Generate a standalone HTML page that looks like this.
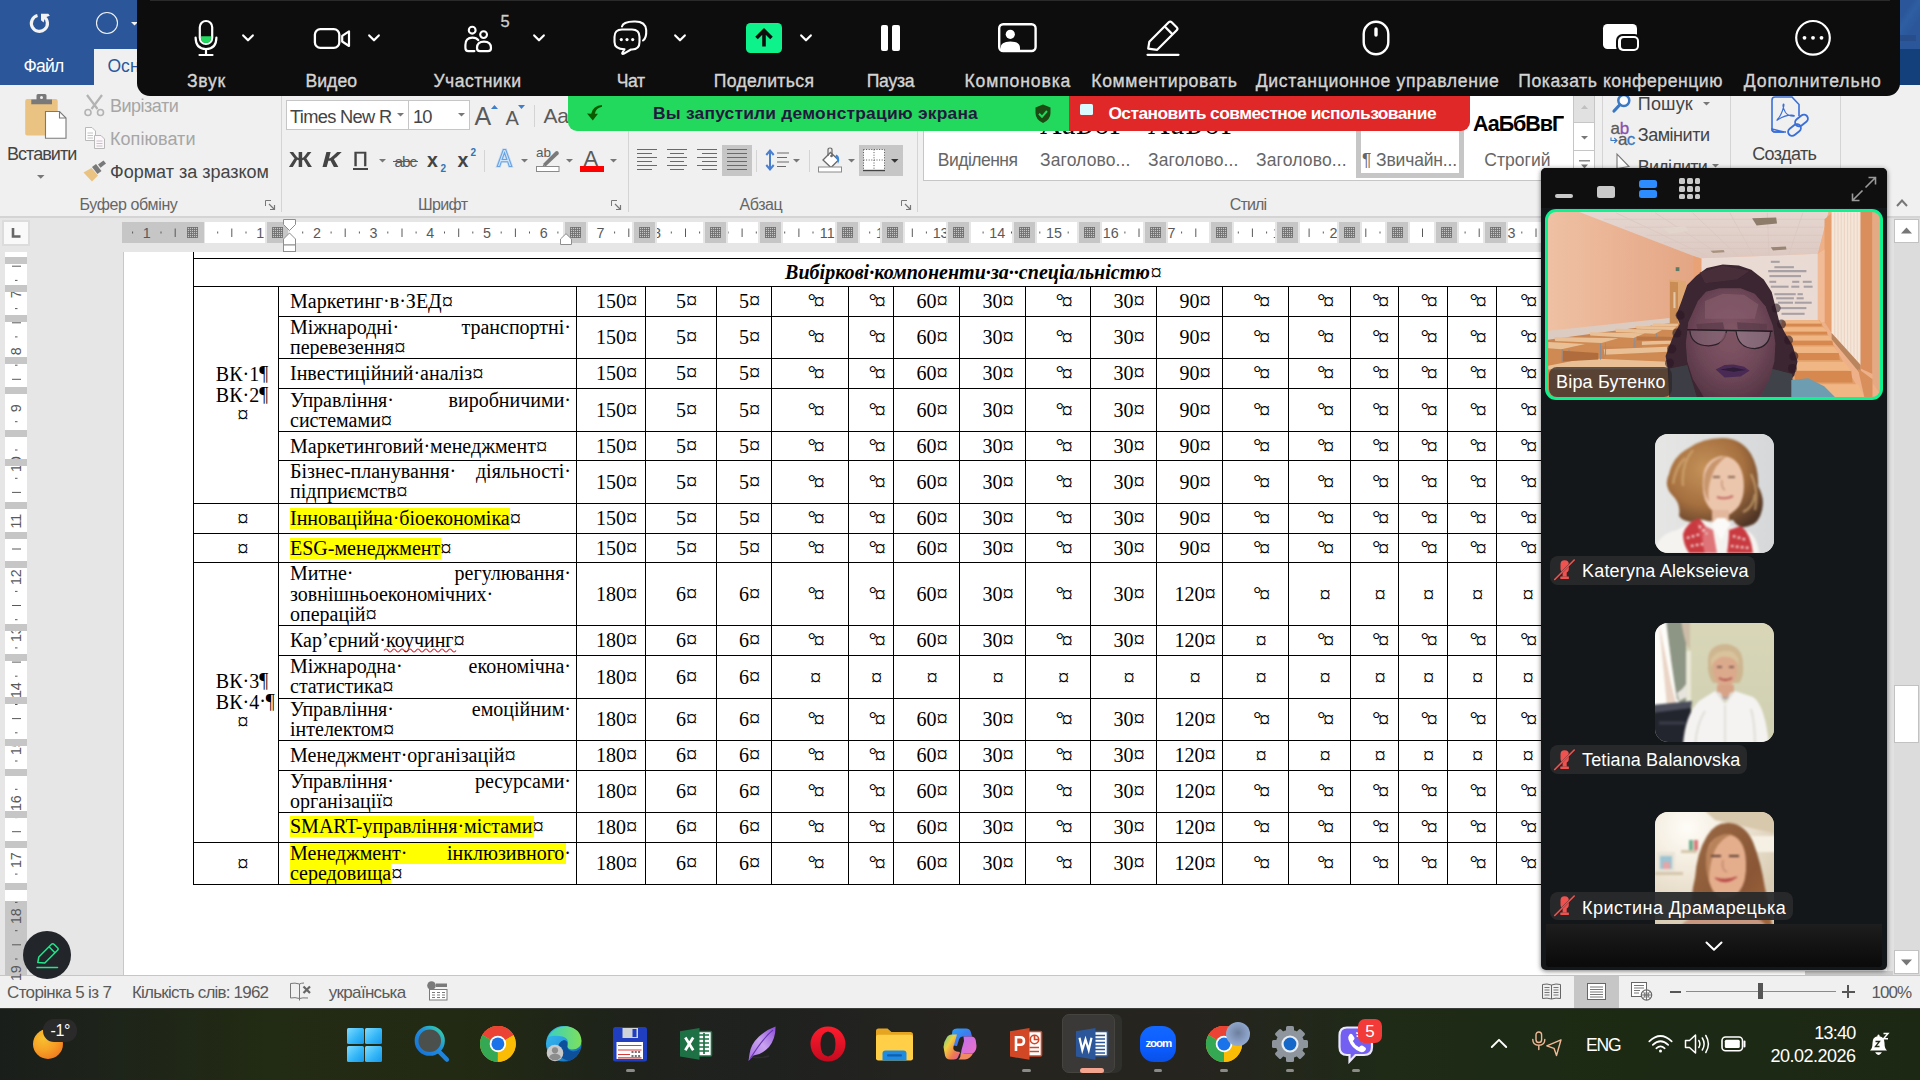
<!DOCTYPE html>
<html><head><meta charset="utf-8"><title>Word</title>
<style>
html,body{margin:0;padding:0;}
body{width:1920px;height:1080px;overflow:hidden;position:relative;background:#e6e6e6;font-family:"Liberation Sans",sans-serif;}
.t{position:absolute;white-space:pre;color:#000;}
.s{font-family:"Liberation Serif",serif;font-size:20px;line-height:20px;}
.m{font-family:"Liberation Mono",monospace;}
.c{width:200px;text-align:center;}
.r{width:300px;text-align:right;}
.c b{position:relative;font-weight:400;}
.c i{position:absolute;left:100%;top:0;font-style:normal;}
.k{font-size:22.5px;line-height:0;font-style:normal;text-decoration:none;position:relative;top:1px;}
div{position:absolute;}
svg{overflow:visible;}
</style></head><body>
<div style="left:0px;top:0px;width:1920px;height:85px;background:#2b579a;"></div>
<div style="left:94px;top:49px;width:120px;height:37px;background:#f0f0f0;"></div>
<div style="left:0px;top:85px;width:1920px;height:131px;background:#f0f0f0;"></div>
<div style="left:0px;top:216px;width:1920px;height:2px;background:#d4d4d4;"></div>
<div style="left:0px;top:218px;width:1920px;height:757px;background:#e6e6e6;"></div>
<div style="left:123px;top:252px;width:1764px;height:723px;background:#c8c8c8;"></div>
<div style="left:124px;top:252px;width:1763px;height:723px;background:#ffffff;"></div>
<div style="left:1887px;top:218px;width:7px;height:757px;background:#e2e2e2;"></div>
<div style="left:1894px;top:218px;width:26px;height:757px;background:#dcdcdc;"></div>
<div style="left:0px;top:975px;width:1920px;height:33px;background:#f0f0f0;"></div>
<div style="left:0px;top:975px;width:1920px;height:1px;background:#c6c6c6;"></div>
<div style="left:0px;top:1008px;width:1920px;height:72px;background:linear-gradient(90deg,#1a1e1a 0%,#1d231a 5%,#222b13 14%,#222a13 24%,#1e221b 33%,#1f211f 40%,#25241f 50%,#26241f 62%,#1f2a17 72%,#1c2a14 85%,#1c2814 100%);"></div>
<div style="left:0px;top:1008px;width:1920px;height:1px;background:#3b3d38;"></div>
<svg style="position:absolute;left:0px;top:0px;" width="1" height="1" viewBox="0 0 1 1"><path d="M43.6 16.500A8 8 0 1 1 37.500 15.550" fill="none" stroke="#f3f3f3" stroke-width="3.200"/><path d="M41 13.800H48.300L49.800 15.800L45 17.600L43.600 22.500L41 20.300Z" fill="#f3f3f3"/></svg>
<svg style="position:absolute;left:95px;top:11px;" width="24" height="24" viewBox="0 0 24 24"><circle cx="12" cy="12" r="10.5" fill="none" stroke="#f3f3f3" stroke-width="1.1"/></svg>
<svg style="position:absolute;left:130.5px;top:21.75px;" width="7" height="3.5" viewBox="0 0 7 3.5"><path d="M0 0H7L3.5 3.5Z" fill="#f3f3f3"/></svg>
<span class="t" style="left:23.5px;top:58px;font-size:17.5px;line-height:17.5px;color:#ffffff;letter-spacing:-0.758px;">Файл</span>
<span class="t" style="left:107.5px;top:58px;font-size:17.5px;line-height:17.5px;color:#2b579a;letter-spacing:0.007px;">Основне</span>
<div style="left:1896px;top:0px;width:24px;height:49px;background:linear-gradient(125deg,#2b579a 0%,#2b579a 30%,#2f5ea3 42%,#2b579a 62%,#2b579a 100%);"></div>
<div style="left:1896px;top:35px;width:20px;height:6px;background:#274e8b;"></div>
<div style="left:1896px;top:49px;width:24px;height:36px;background:#13407a;"></div>
<svg style="position:absolute;left:25px;top:94px;" width="42" height="45" viewBox="0 0 42 45"><rect x="0.2" y="5" width="32.5" height="36.4" rx="2" fill="#eac282"/><path d="M6.3 5.5H11.5V1.5Q11.5 0 13 0H20Q21.5 0 21.5 1.5V5.5H27V10.3H6.3Z" fill="#797979"/><circle cx="16.5" cy="3.4" r="1.5" fill="#f0f0f0"/><path d="M20.5 17.5H34.5L41 24V44.3H20.5Z" fill="#fff" stroke="#797979" stroke-width="1.1"/><path d="M34.5 17.5V24H41" fill="none" stroke="#797979" stroke-width="1.1"/></svg>
<span class="t" style="left:7px;top:145px;font-size:18px;line-height:18px;color:#444444;letter-spacing:-0.961px;">Вставити</span>
<svg style="position:absolute;left:37.25px;top:175.1px;" width="7.5" height="3.8" viewBox="0 0 7.5 3.8"><path d="M0 0H7.5L3.75 3.8Z" fill="#777777"/></svg>
<svg style="position:absolute;left:84px;top:94px;" width="21" height="23" viewBox="0 0 21 23"><path d="M3 1L13.5 15M18 1L7.5 15" stroke="#b3b3b3" stroke-width="2.2" fill="none"/><circle cx="4" cy="18.5" r="3" fill="none" stroke="#b3b3b3" stroke-width="1.6"/><circle cx="16.5" cy="18.5" r="3" fill="none" stroke="#b3b3b3" stroke-width="1.6"/></svg>
<span class="t" style="left:110px;top:97px;font-size:18px;line-height:18px;color:#a6a6a6;letter-spacing:-0.494px;">Вирізати</span>
<svg style="position:absolute;left:85px;top:127px;" width="21" height="23" viewBox="0 0 21 23"><path d="M0.5 0.5H7L10.5 4V13.5H0.5Z" fill="#fdfdfd" stroke="#b9b9b9" stroke-width="1"/><path d="M9.5 8.5H16L19.5 12V21.5H9.5Z" fill="#fdf6fb" stroke="#b9b9b9" stroke-width="1"/><path d="M2.5 6H8M2.5 8.5H8M2.5 11H8M11.5 14H17.5M11.5 16.5H17.5M11.5 19H17.5" stroke="#c4c4c4" stroke-width="1"/></svg>
<span class="t" style="left:110px;top:130px;font-size:18px;line-height:18px;color:#a6a6a6;letter-spacing:0.052px;">Копіювати</span>
<svg style="position:absolute;left:83px;top:160px;" width="24" height="22" viewBox="0 0 24 22"><path d="M0.5 12.5L8.5 8L15 15.5L9 21.5Z" fill="#eac282"/><path d="M9 7L13 4L18.5 11L14.5 14Z" fill="#797979"/><path d="M15 4.5L20.5 0.5L23 3.5L17.5 7.8Z" fill="#797979"/></svg>
<span class="t" style="left:110px;top:163px;font-size:18px;line-height:18px;color:#444444;">Формат за зразком</span>
<span class="t" style="left:79.4px;top:197px;font-size:16px;line-height:16px;color:#666666;letter-spacing:-0.365px;">Буфер обміну</span>
<svg style="position:absolute;left:264.5px;top:199.5px;" width="11" height="11" viewBox="0 0 11 11"><path d="M0.5 6V0.5H6" fill="none" stroke="#777" stroke-width="1"/><path d="M4 4L9 9M9.5 5V9.5H5" fill="none" stroke="#777" stroke-width="1.2"/></svg>
<div style="left:281px;top:90px;width:1px;height:122px;background:#d4d4d4;"></div>
<div style="left:286px;top:100px;width:184px;height:30px;background:#c6c6c6;"></div>
<div style="left:287px;top:101px;width:121px;height:28px;background:#fff;"></div>
<div style="left:409px;top:101px;width:60px;height:28px;background:#fff;"></div>
<span class="t" style="left:290px;top:108px;font-size:18.3px;line-height:18.3px;color:#444444;letter-spacing:-0.685px;">Times New R</span>
<svg style="position:absolute;left:396.5px;top:112.75px;" width="7" height="3.5" viewBox="0 0 7 3.5"><path d="M0 0H7L3.5 3.5Z" fill="#777777"/></svg>
<span class="t" style="left:413px;top:108px;font-size:18.3px;line-height:18.3px;color:#444444;letter-spacing:-0.922px;">10</span>
<svg style="position:absolute;left:457.5px;top:112.75px;" width="7" height="3.5" viewBox="0 0 7 3.5"><path d="M0 0H7L3.5 3.5Z" fill="#777777"/></svg>
<span class="t" style="left:474.5px;top:104px;font-size:25px;line-height:25px;color:#5a5a5a;letter-spacing:0.812px;">A</span>
<svg style="position:absolute;left:491px;top:105px;" width="7" height="4" viewBox="0 0 7 4"><path d="M0 4L3.5 0L7 4Z" fill="#3e7fc9"/></svg>
<span class="t" style="left:505.5px;top:108px;font-size:20px;line-height:20px;color:#5a5a5a;letter-spacing:0.656px;">A</span>
<svg style="position:absolute;left:518px;top:105px;" width="7" height="4" viewBox="0 0 7 4"><path d="M0 0H7L3.5 4Z" fill="#3e7fc9"/></svg>
<div style="left:534px;top:105px;width:1px;height:22px;background:#d4d4d4;"></div>
<span class="t" style="left:543.4px;top:105px;font-size:21px;line-height:21px;color:#5a5a5a;letter-spacing:-0.044px;">Aa</span>
<span class="t" style="left:289.4px;top:150px;font-size:21.5px;line-height:21.5px;color:#444444;font-weight:700;transform:scaleX(1.173);transform-origin:0 0;">Ж</span>
<span class="t" style="left:321.5px;top:150px;font-size:21.5px;line-height:21.5px;color:#444444;font-weight:700;font-style:italic;transform:scaleX(1.362);transform-origin:0 0;">К</span>
<span class="t" style="left:353.3px;top:149px;font-size:20px;line-height:20px;color:#444444;transform:scaleX(1.023);transform-origin:0 0;-webkit-text-stroke:0.4px #444;">П</span>
<div style="left:353.3px;top:168.3px;width:14.7px;height:1.5px;background:#444444;"></div>
<svg style="position:absolute;left:379.0px;top:159.05px;" width="7" height="3.5" viewBox="0 0 7 3.5"><path d="M0 0H7L3.5 3.5Z" fill="#777777"/></svg>
<span class="t" style="left:394.5px;top:154px;font-size:15.5px;line-height:15.5px;color:#5a5a5a;letter-spacing:-1.167px;">abc</span>
<div style="left:393px;top:161px;width:24.5px;height:1px;background:#5a5a5a;"></div>
<span class="t" style="left:427px;top:151px;font-size:19.5px;line-height:19.5px;color:#444444;font-weight:700;letter-spacing:0.641px;">x</span>
<span class="t" style="left:440.5px;top:164px;font-size:10px;line-height:10px;color:#2e75b6;font-weight:700;letter-spacing:-0.062px;">2</span>
<span class="t" style="left:457.5px;top:151px;font-size:19.5px;line-height:19.5px;color:#444444;font-weight:700;letter-spacing:0.641px;">x</span>
<span class="t" style="left:470.5px;top:148px;font-size:10px;line-height:10px;color:#2e75b6;font-weight:700;letter-spacing:-0.062px;">2</span>
<div style="left:484px;top:150px;width:1px;height:22px;background:#d4d4d4;"></div>
<svg style="position:absolute;left:495px;top:148px;" width="20" height="20" viewBox="0 0 20 20"><path d="M2.2 18.5L8.3 1.5H10.7L16.8 18.5H14.3L12.7 13.7H6.3L4.7 18.5Z M7.1 11.5H11.9L9.5 4.6Z" fill="#ffffff" stroke="#3e86d6" stroke-width="1.1" fill-rule="evenodd"/><path d="M2.2 18.5L8.3 1.5H10.7L16.8 18.5H14.3L12.7 13.7H6.3L4.7 18.5Z M7.1 11.5H11.9L9.5 4.6Z" fill="none" stroke="#9cc6f2" stroke-width="2.6" opacity=".45" fill-rule="evenodd"/></svg>
<svg style="position:absolute;left:520.5px;top:159.05px;" width="7" height="3.5" viewBox="0 0 7 3.5"><path d="M0 0H7L3.5 3.5Z" fill="#777777"/></svg>
<span class="t" style="left:536px;top:146px;font-size:13.5px;line-height:13.5px;color:#5a5a5a;letter-spacing:-0.016px;">ab</span>
<svg style="position:absolute;left:536px;top:149px;" width="25" height="24" viewBox="0 0 25 24"><path d="M9.5 17.5L7 15L19.5 2.5Q21 1.5 22.3 2.8Q23.5 4.3 22.3 5.6Z" fill="#7a7a7a"/><path d="M5 20L7.5 15.5L9.5 17.5Z" fill="#7a7a7a"/><rect x="0.5" y="17.5" width="22.5" height="5" fill="#fff" stroke="#8a8a8a" stroke-width="1"/></svg>
<svg style="position:absolute;left:565.5px;top:159.05px;" width="7" height="3.5" viewBox="0 0 7 3.5"><path d="M0 0H7L3.5 3.5Z" fill="#777777"/></svg>
<span class="t" style="left:583.5px;top:148px;font-size:22px;line-height:22px;color:#5a5a5a;letter-spacing:2.312px;">A</span>
<div style="left:580px;top:166px;width:24px;height:6px;background:#ff0000;"></div>
<svg style="position:absolute;left:610.0px;top:159.05px;" width="7" height="3.5" viewBox="0 0 7 3.5"><path d="M0 0H7L3.5 3.5Z" fill="#777777"/></svg>
<span class="t" style="left:418px;top:197px;font-size:16px;line-height:16px;color:#666666;letter-spacing:-0.628px;">Шрифт</span>
<svg style="position:absolute;left:610.5px;top:199.5px;" width="11" height="11" viewBox="0 0 11 11"><path d="M0.5 6V0.5H6" fill="none" stroke="#777" stroke-width="1"/><path d="M4 4L9 9M9.5 5V9.5H5" fill="none" stroke="#777" stroke-width="1.2"/></svg>
<div style="left:628px;top:90px;width:1px;height:122px;background:#d4d4d4;"></div>
<svg style="position:absolute;left:0px;top:0px;" width="1" height="1" viewBox="0 0 1 1"><path d="M637 149.5H657M637 153.5H652M637 157.5H657M637 161.5H652M637 165.5H657M637 169.5H652" stroke="#6a6a6a" stroke-width="1.2" fill="none"/></svg>
<svg style="position:absolute;left:0px;top:0px;" width="1" height="1" viewBox="0 0 1 1"><path d="M667 149.5H687M670 153.5H684M667 157.5H687M670 161.5H684M667 165.5H687M670 169.5H684" stroke="#6a6a6a" stroke-width="1.2" fill="none"/></svg>
<svg style="position:absolute;left:0px;top:0px;" width="1" height="1" viewBox="0 0 1 1"><path d="M697 149.5H717M702 153.5H717M697 157.5H717M702 161.5H717M697 165.5H717M702 169.5H717" stroke="#6a6a6a" stroke-width="1.2" fill="none"/></svg>
<div style="left:722px;top:145px;width:30px;height:31px;background:#c6c6c6;"></div>
<svg style="position:absolute;left:0px;top:0px;" width="1" height="1" viewBox="0 0 1 1"><path d="M727 149.5H747M727 153.5H747M727 157.5H747M727 161.5H747M727 165.5H747M727 169.5H747" stroke="#6a6a6a" stroke-width="1.2" fill="none"/></svg>
<div style="left:756px;top:150px;width:1px;height:22px;background:#d4d4d4;"></div>
<svg style="position:absolute;left:765px;top:148px;" width="24" height="24" viewBox="0 0 24 24"><path d="M5 3V21M1.3 7L5 2.5L8.7 7M1.3 17L5 21.5L8.7 17" fill="none" stroke="#4a7fcf" stroke-width="2"/><path d="M12 5H24M12 9.5H22M12 14H24M12 18.5H21" stroke="#6a6a6a" stroke-width="1.2"/></svg>
<svg style="position:absolute;left:793.0px;top:159.05px;" width="7" height="3.5" viewBox="0 0 7 3.5"><path d="M0 0H7L3.5 3.5Z" fill="#777777"/></svg>
<div style="left:809px;top:150px;width:1px;height:22px;background:#d4d4d4;"></div>
<svg style="position:absolute;left:818px;top:147px;" width="25" height="26" viewBox="0 0 25 26"><path d="M5 13L12.5 5.5L20.5 13L13 20.5Z" fill="#fff" stroke="#6a6a6a" stroke-width="1.3"/><path d="M10 9V2.8Q10 1 12 1Q14 1 14 2.8V9" fill="none" stroke="#6a6a6a" stroke-width="1.2"/><circle cx="13.5" cy="9" r="1.3" fill="#6a6a6a"/><path d="M18.5 7.5Q23 10 20 17Q19.5 12 17 9.5Z" fill="#3e86d6"/><rect x="0.5" y="20" width="23" height="5" fill="#fff" stroke="#8a8a8a" stroke-width="1"/></svg>
<svg style="position:absolute;left:848.0px;top:159.05px;" width="7" height="3.5" viewBox="0 0 7 3.5"><path d="M0 0H7L3.5 3.5Z" fill="#777777"/></svg>
<div style="left:859px;top:145px;width:44px;height:31px;background:#c6c6c6;"></div>
<svg style="position:absolute;left:863px;top:149px;" width="22" height="22" viewBox="0 0 22 22"><rect x="0.5" y="0.5" width="21" height="21" fill="#fff" stroke="none"/><path d="M0.5 0.5H21.5M0.5 0.5V21.5M21.5 0.5V21.5M11 0.5V21.5M0.5 11H21.5" stroke="#555" stroke-width="1" stroke-dasharray="1 1.6" fill="none"/><path d="M0 21.5H22" stroke="#444" stroke-width="1.4"/></svg>
<svg style="position:absolute;left:891.25px;top:158.9px;" width="7.5" height="3.8" viewBox="0 0 7.5 3.8"><path d="M0 0H7.5L3.75 3.8Z" fill="#333"/></svg>
<span class="t" style="left:739.6px;top:197px;font-size:16px;line-height:16px;color:#666666;letter-spacing:-0.458px;">Абзац</span>
<svg style="position:absolute;left:900.5px;top:199.5px;" width="11" height="11" viewBox="0 0 11 11"><path d="M0.5 6V0.5H6" fill="none" stroke="#777" stroke-width="1"/><path d="M4 4L9 9M9.5 5V9.5H5" fill="none" stroke="#777" stroke-width="1.2"/></svg>
<div style="left:917px;top:90px;width:1px;height:122px;background:#d4d4d4;"></div>
<div style="left:923px;top:90px;width:672px;height:91px;background:#c6c6c6;"></div>
<div style="left:924px;top:90px;width:670px;height:90px;background:#ffffff;"></div>
<div style="left:1356px;top:96px;width:108px;height:82px;background:#c6c6c6;"></div>
<div style="left:1361px;top:96px;width:98px;height:77px;background:#ffffff;"></div>
<span class="t s" style="left:1040px;top:109px;font-size:30px;line-height:30px;letter-spacing:0.716px;">АаБбГ</span>
<span class="t s" style="left:1148px;top:109px;font-size:30px;line-height:30px;letter-spacing:1.516px;">АаБбГ</span>
<div style="left:924px;top:136px;width:420px;height:12px;background:#fff;"></div>
<span class="t" style="left:937.8px;top:152px;font-size:17.5px;line-height:17.5px;color:#666666;letter-spacing:-0.522px;">Виділення</span>
<span class="t" style="left:1040px;top:152px;font-size:17.5px;line-height:17.5px;color:#666666;letter-spacing:0.116px;">Заголово...</span>
<span class="t" style="left:1148px;top:152px;font-size:17.5px;line-height:17.5px;color:#666666;letter-spacing:0.116px;">Заголово...</span>
<span class="t" style="left:1256px;top:152px;font-size:17.5px;line-height:17.5px;color:#666666;letter-spacing:0.144px;">Заголово...</span>
<span class="t" style="left:1362px;top:152px;font-size:17.5px;line-height:17.5px;color:#666666;letter-spacing:-0.148px;">¶ Звичайн...</span>
<span class="t" style="left:1473px;top:114px;font-size:21.5px;line-height:21.5px;font-weight:700;letter-spacing:-1.047px;">АаБбВвГг</span>
<div style="left:1564px;top:110px;width:9px;height:24px;background:#fff;"></div>
<span class="t" style="left:1484.3px;top:152px;font-size:17.5px;line-height:17.5px;color:#666666;letter-spacing:0.048px;">Строгий</span>
<div style="left:1573px;top:90px;width:22px;height:91px;background:#c6c6c6;"></div>
<div style="left:1574px;top:90px;width:20px;height:32px;background:#e1e1e1;"></div>
<div style="left:1574px;top:123px;width:20px;height:27px;background:#fff;"></div>
<div style="left:1574px;top:151px;width:20px;height:29px;background:#fff;"></div>
<svg style="position:absolute;left:1580.5px;top:105px;" width="7" height="4" viewBox="0 0 7 4"><path d="M0 4L3.5 0L7 4Z" fill="#c0c0c0"/></svg>
<svg style="position:absolute;left:1580.5px;top:135.75px;" width="7" height="3.5" viewBox="0 0 7 3.5"><path d="M0 0H7L3.5 3.5Z" fill="#777777"/></svg>
<svg style="position:absolute;left:1578.5px;top:160px;" width="11" height="9" viewBox="0 0 11 9"><path d="M0 0.8H11" stroke="#777" stroke-width="1.3"/><path d="M2 4.5H9L5.5 8.5Z" fill="#777"/></svg>
<span class="t" style="left:1229.7px;top:197px;font-size:16px;line-height:16px;color:#666666;letter-spacing:-0.824px;">Стилі</span>
<div style="left:1602px;top:90px;width:1px;height:122px;background:#d4d4d4;"></div>
<svg style="position:absolute;left:1612px;top:93px;" width="20" height="20" viewBox="0 0 20 20"><circle cx="11.800" cy="7.600" r="5.500" fill="#fdfdfd" stroke="#3b78c3" stroke-width="2.500"/><path d="M7.600 12L2 18" stroke="#3b78c3" stroke-width="3.200" stroke-linecap="round"/></svg>
<span class="t" style="left:1637.8px;top:95px;font-size:18px;line-height:18px;color:#444444;letter-spacing:0.147px;">Пошук</span>
<svg style="position:absolute;left:1702.5px;top:102.25px;" width="7" height="3.5" viewBox="0 0 7 3.5"><path d="M0 0H7L3.5 3.5Z" fill="#777777"/></svg>
<span class="t" style="left:1610.5px;top:120px;font-size:17px;line-height:17px;color:#5a5a5a;letter-spacing:-0.469px;-webkit-text-stroke:.3px #5a5a5a;">a</span>
<span class="t" style="left:1619.8px;top:120px;font-size:17px;line-height:17px;color:#8a4fb0;letter-spacing:-0.769px;-webkit-text-stroke:.3px #8a4fb0;">b</span>
<span class="t" style="left:1618px;top:131px;font-size:17px;line-height:17px;color:#5a5a5a;letter-spacing:-0.469px;-webkit-text-stroke:.3px #5a5a5a;">a</span>
<span class="t" style="left:1626.8px;top:131px;font-size:17px;line-height:17px;color:#3b78c3;letter-spacing:-1.300px;-webkit-text-stroke:.3px #3b78c3;">c</span>
<svg style="position:absolute;left:1610px;top:137px;" width="8" height="7" viewBox="0 0 8 7"><path d="M1 0.5V3.5H6.5M4.3 1L7 3.5L4.3 6" fill="none" stroke="#3b78c3" stroke-width="1.1"/></svg>
<span class="t" style="left:1637.8px;top:126px;font-size:18px;line-height:18px;color:#444444;letter-spacing:-0.483px;">Замінити</span>
<svg style="position:absolute;left:1616px;top:153px;" width="14" height="16" viewBox="0 0 14 16"><path d="M1 1V15.5L13 13.5Z" fill="#fdfdfd" stroke="#777" stroke-width="1.1"/></svg>
<span class="t" style="left:1637.8px;top:158px;font-size:18px;line-height:18px;color:#444444;letter-spacing:-0.778px;">Виділити</span>
<svg style="position:absolute;left:1711.5px;top:164.25px;" width="7" height="3.5" viewBox="0 0 7 3.5"><path d="M0 0H7L3.5 3.5Z" fill="#777777"/></svg>
<div style="left:1730px;top:90px;width:1px;height:122px;background:#d4d4d4;"></div>
<svg style="position:absolute;left:1770px;top:96px;" width="40" height="44" viewBox="0 0 40 44"><path d="M2 4Q2 1 5 1H22L29 8.5V20M14 36H5Q2 36 2 33Z" fill="none" stroke="#3a6fd8" stroke-width="1.6"/><path d="M2 4V33Q2 36 5 36H16" fill="none" stroke="#3a6fd8" stroke-width="1.6"/><path d="M7.500 24Q6.300 24.800 7.300 23.500Q11.500 19.500 13.800 10Q14.300 7.500 13.300 8.200Q12 10.500 15.500 16.500Q18.500 20.300 23.500 20.200Q25.500 19.800 23.300 19.200Q15.500 18.500 7.500 24Z" fill="none" stroke="#3a6fd8" stroke-width="1.100"/><rect x="24.5" y="20.5" width="14" height="8" rx="4" fill="none" stroke="#3a6fd8" stroke-width="1.9" transform="rotate(-38 31.5 24.5)"/><rect x="17.5" y="30" width="14" height="8" rx="4" fill="none" stroke="#3a6fd8" stroke-width="1.9" transform="rotate(-38 24.5 34)"/></svg>
<span class="t" style="left:1752.2px;top:145px;font-size:18px;line-height:18px;color:#444444;letter-spacing:-0.601px;">Создать</span>
<div style="left:1840px;top:90px;width:1px;height:122px;background:#d4d4d4;"></div>
<svg style="position:absolute;left:1895.5px;top:199px;" width="12" height="8" viewBox="0 0 12 8"><path d="M1 7L6 1.5L11 7" fill="none" stroke="#777" stroke-width="2"/></svg>
<div style="left:2px;top:220px;width:28px;height:26px;background:#dcdcdc;"></div>
<div style="left:4px;top:222px;width:24px;height:22px;background:#f9f9f9;"></div>
<svg style="position:absolute;left:11px;top:228px;" width="10" height="11" viewBox="0 0 10 11"><path d="M2 0V8.5H9.5" fill="none" stroke="#666" stroke-width="2.6"/></svg>
<div style="left:122px;top:222px;width:82px;height:21px;background:#c6c6c6;"></div>
<div style="left:205px;top:222px;width:1336px;height:21px;background:#ffffff;"></div>
<svg style="position:absolute;left:0px;top:0px;" width="1" height="1" viewBox="0 0 1 1"><path d="M132.6 231.5V233.5M161.0 231.5V233.5M175.2 228.5V237M189.3 231.5V233.5M217.7 231.5V233.5M231.8 228.5V237M246.0 231.5V233.5M274.4 231.5V233.5M288.6 228.5V237M302.7 231.5V233.5M331.1 231.5V233.5M345.2 228.5V237M359.4 231.5V233.5M387.8 231.5V233.5M402.0 228.5V237M416.1 231.5V233.5M444.5 231.5V233.5M458.7 228.5V237M472.8 231.5V233.5M501.2 231.5V233.5M515.4 228.5V237M529.5 231.5V233.5M557.9 231.5V233.5M572.1 228.5V237M586.2 231.5V233.5M614.6 231.5V233.5M628.8 228.5V237M642.9 231.5V233.5M671.3 231.5V233.5M685.5 228.5V237M699.6 231.5V233.5M728.0 231.5V233.5M742.1 228.5V237M756.3 231.5V233.5M784.7 231.5V233.5M798.9 228.5V237M813.0 231.5V233.5M841.4 231.5V233.5M855.6 228.5V237M869.7 231.5V233.5M898.1 231.5V233.5M912.3 228.5V237M926.4 231.5V233.5M954.8 231.5V233.5M969.0 228.5V237M983.1 231.5V233.5M1011.5 231.5V233.5M1025.7 228.5V237M1039.8 231.5V233.5M1068.2 231.5V233.5M1082.3 228.5V237M1096.5 231.5V233.5M1124.9 231.5V233.5M1139.0 228.5V237M1153.2 231.5V233.5M1181.6 231.5V233.5M1195.8 228.5V237M1209.9 231.5V233.5M1238.3 231.5V233.5M1252.4 228.5V237M1266.6 231.5V233.5M1295.0 231.5V233.5M1309.1 228.5V237M1323.3 231.5V233.5M1351.7 231.5V233.5M1365.8 228.5V237M1380.0 231.5V233.5M1408.4 231.5V233.5M1422.5 228.5V237M1436.7 231.5V233.5M1465.1 231.5V233.5M1479.2 228.5V237M1493.4 231.5V233.5M1521.8 231.5V233.5M1536.0 228.5V237" stroke="#595959" stroke-width="1" fill="none"/></svg>
<span class="t" style="left:126.8px;width:40px;text-align:center;top:226px;font-size:14.3px;line-height:14.3px;color:#595959">1</span>
<span class="t" style="left:240.2px;width:40px;text-align:center;top:226px;font-size:14.3px;line-height:14.3px;color:#595959">1</span>
<span class="t" style="left:296.9px;width:40px;text-align:center;top:226px;font-size:14.3px;line-height:14.3px;color:#595959">2</span>
<span class="t" style="left:353.6px;width:40px;text-align:center;top:226px;font-size:14.3px;line-height:14.3px;color:#595959">3</span>
<span class="t" style="left:410.3px;width:40px;text-align:center;top:226px;font-size:14.3px;line-height:14.3px;color:#595959">4</span>
<span class="t" style="left:467.0px;width:40px;text-align:center;top:226px;font-size:14.3px;line-height:14.3px;color:#595959">5</span>
<span class="t" style="left:523.7px;width:40px;text-align:center;top:226px;font-size:14.3px;line-height:14.3px;color:#595959">6</span>
<span class="t" style="left:580.4px;width:40px;text-align:center;top:226px;font-size:14.3px;line-height:14.3px;color:#595959">7</span>
<span class="t" style="left:637.1px;width:40px;text-align:center;top:226px;font-size:14.3px;line-height:14.3px;color:#595959">8</span>
<span class="t" style="left:693.8px;width:40px;text-align:center;top:226px;font-size:14.3px;line-height:14.3px;color:#595959">9</span>
<span class="t" style="left:750.5px;width:40px;text-align:center;top:226px;font-size:14.3px;line-height:14.3px;color:#595959">10</span>
<span class="t" style="left:807.2px;width:40px;text-align:center;top:226px;font-size:14.3px;line-height:14.3px;color:#595959">11</span>
<span class="t" style="left:863.9px;width:40px;text-align:center;top:226px;font-size:14.3px;line-height:14.3px;color:#595959">12</span>
<span class="t" style="left:920.6px;width:40px;text-align:center;top:226px;font-size:14.3px;line-height:14.3px;color:#595959">13</span>
<span class="t" style="left:977.3px;width:40px;text-align:center;top:226px;font-size:14.3px;line-height:14.3px;color:#595959">14</span>
<span class="t" style="left:1034.0px;width:40px;text-align:center;top:226px;font-size:14.3px;line-height:14.3px;color:#595959">15</span>
<span class="t" style="left:1090.7px;width:40px;text-align:center;top:226px;font-size:14.3px;line-height:14.3px;color:#595959">16</span>
<span class="t" style="left:1147.4px;width:40px;text-align:center;top:226px;font-size:14.3px;line-height:14.3px;color:#595959">17</span>
<span class="t" style="left:1204.1px;width:40px;text-align:center;top:226px;font-size:14.3px;line-height:14.3px;color:#595959">18</span>
<span class="t" style="left:1260.8px;width:40px;text-align:center;top:226px;font-size:14.3px;line-height:14.3px;color:#595959">19</span>
<span class="t" style="left:1317.5px;width:40px;text-align:center;top:226px;font-size:14.3px;line-height:14.3px;color:#595959">20</span>
<span class="t" style="left:1374.2px;width:40px;text-align:center;top:226px;font-size:14.3px;line-height:14.3px;color:#595959">21</span>
<span class="t" style="left:1430.9px;width:40px;text-align:center;top:226px;font-size:14.3px;line-height:14.3px;color:#595959">22</span>
<span class="t" style="left:1487.6px;width:40px;text-align:center;top:226px;font-size:14.3px;line-height:14.3px;color:#595959">23</span>
<svg style="position:absolute;left:186.5px;top:227px;" width="11" height="11" viewBox="0 0 11 11"><path d="M0.5 0V11M0 0.5H11" stroke="#6e6e6e" stroke-width="1" opacity=".85"/><path d="M2.5 0V11M0 2.5H11" stroke="#6e6e6e" stroke-width="1" opacity=".85"/><path d="M4.5 0V11M0 4.5H11" stroke="#6e6e6e" stroke-width="1" opacity=".85"/><path d="M6.5 0V11M0 6.5H11" stroke="#6e6e6e" stroke-width="1" opacity=".85"/><path d="M8.5 0V11M0 8.5H11" stroke="#6e6e6e" stroke-width="1" opacity=".85"/><path d="M10.5 0V11M0 10.5H11" stroke="#6e6e6e" stroke-width="1" opacity=".85"/></svg>
<div style="left:265px;top:222px;width:25px;height:21px;background:#e6e6e6;"></div>
<div style="left:266.7px;top:222px;width:21.5px;height:21px;background:#c6c6c6;"></div>
<svg style="position:absolute;left:271.5px;top:227px;" width="11" height="11" viewBox="0 0 11 11"><path d="M0.5 0V11M0 0.5H11" stroke="#6e6e6e" stroke-width="1" opacity=".85"/><path d="M2.5 0V11M0 2.5H11" stroke="#6e6e6e" stroke-width="1" opacity=".85"/><path d="M4.5 0V11M0 4.5H11" stroke="#6e6e6e" stroke-width="1" opacity=".85"/><path d="M6.5 0V11M0 6.5H11" stroke="#6e6e6e" stroke-width="1" opacity=".85"/><path d="M8.5 0V11M0 8.5H11" stroke="#6e6e6e" stroke-width="1" opacity=".85"/><path d="M10.5 0V11M0 10.5H11" stroke="#6e6e6e" stroke-width="1" opacity=".85"/></svg>
<div style="left:563px;top:222px;width:25px;height:21px;background:#e6e6e6;"></div>
<div style="left:564.7px;top:222px;width:21.5px;height:21px;background:#c6c6c6;"></div>
<svg style="position:absolute;left:569.5px;top:227px;" width="11" height="11" viewBox="0 0 11 11"><path d="M0.5 0V11M0 0.5H11" stroke="#6e6e6e" stroke-width="1" opacity=".85"/><path d="M2.5 0V11M0 2.5H11" stroke="#6e6e6e" stroke-width="1" opacity=".85"/><path d="M4.5 0V11M0 4.5H11" stroke="#6e6e6e" stroke-width="1" opacity=".85"/><path d="M6.5 0V11M0 6.5H11" stroke="#6e6e6e" stroke-width="1" opacity=".85"/><path d="M8.5 0V11M0 8.5H11" stroke="#6e6e6e" stroke-width="1" opacity=".85"/><path d="M10.5 0V11M0 10.5H11" stroke="#6e6e6e" stroke-width="1" opacity=".85"/></svg>
<div style="left:632px;top:222px;width:25px;height:21px;background:#e6e6e6;"></div>
<div style="left:633.7px;top:222px;width:21.5px;height:21px;background:#c6c6c6;"></div>
<svg style="position:absolute;left:638.5px;top:227px;" width="11" height="11" viewBox="0 0 11 11"><path d="M0.5 0V11M0 0.5H11" stroke="#6e6e6e" stroke-width="1" opacity=".85"/><path d="M2.5 0V11M0 2.5H11" stroke="#6e6e6e" stroke-width="1" opacity=".85"/><path d="M4.5 0V11M0 4.5H11" stroke="#6e6e6e" stroke-width="1" opacity=".85"/><path d="M6.5 0V11M0 6.5H11" stroke="#6e6e6e" stroke-width="1" opacity=".85"/><path d="M8.5 0V11M0 8.5H11" stroke="#6e6e6e" stroke-width="1" opacity=".85"/><path d="M10.5 0V11M0 10.5H11" stroke="#6e6e6e" stroke-width="1" opacity=".85"/></svg>
<div style="left:703px;top:222px;width:25px;height:21px;background:#e6e6e6;"></div>
<div style="left:704.7px;top:222px;width:21.5px;height:21px;background:#c6c6c6;"></div>
<svg style="position:absolute;left:709.5px;top:227px;" width="11" height="11" viewBox="0 0 11 11"><path d="M0.5 0V11M0 0.5H11" stroke="#6e6e6e" stroke-width="1" opacity=".85"/><path d="M2.5 0V11M0 2.5H11" stroke="#6e6e6e" stroke-width="1" opacity=".85"/><path d="M4.5 0V11M0 4.5H11" stroke="#6e6e6e" stroke-width="1" opacity=".85"/><path d="M6.5 0V11M0 6.5H11" stroke="#6e6e6e" stroke-width="1" opacity=".85"/><path d="M8.5 0V11M0 8.5H11" stroke="#6e6e6e" stroke-width="1" opacity=".85"/><path d="M10.5 0V11M0 10.5H11" stroke="#6e6e6e" stroke-width="1" opacity=".85"/></svg>
<div style="left:758px;top:222px;width:25px;height:21px;background:#e6e6e6;"></div>
<div style="left:759.7px;top:222px;width:21.5px;height:21px;background:#c6c6c6;"></div>
<svg style="position:absolute;left:764.5px;top:227px;" width="11" height="11" viewBox="0 0 11 11"><path d="M0.5 0V11M0 0.5H11" stroke="#6e6e6e" stroke-width="1" opacity=".85"/><path d="M2.5 0V11M0 2.5H11" stroke="#6e6e6e" stroke-width="1" opacity=".85"/><path d="M4.5 0V11M0 4.5H11" stroke="#6e6e6e" stroke-width="1" opacity=".85"/><path d="M6.5 0V11M0 6.5H11" stroke="#6e6e6e" stroke-width="1" opacity=".85"/><path d="M8.5 0V11M0 8.5H11" stroke="#6e6e6e" stroke-width="1" opacity=".85"/><path d="M10.5 0V11M0 10.5H11" stroke="#6e6e6e" stroke-width="1" opacity=".85"/></svg>
<div style="left:835px;top:222px;width:25px;height:21px;background:#e6e6e6;"></div>
<div style="left:836.7px;top:222px;width:21.5px;height:21px;background:#c6c6c6;"></div>
<svg style="position:absolute;left:841.5px;top:227px;" width="11" height="11" viewBox="0 0 11 11"><path d="M0.5 0V11M0 0.5H11" stroke="#6e6e6e" stroke-width="1" opacity=".85"/><path d="M2.5 0V11M0 2.5H11" stroke="#6e6e6e" stroke-width="1" opacity=".85"/><path d="M4.5 0V11M0 4.5H11" stroke="#6e6e6e" stroke-width="1" opacity=".85"/><path d="M6.5 0V11M0 6.5H11" stroke="#6e6e6e" stroke-width="1" opacity=".85"/><path d="M8.5 0V11M0 8.5H11" stroke="#6e6e6e" stroke-width="1" opacity=".85"/><path d="M10.5 0V11M0 10.5H11" stroke="#6e6e6e" stroke-width="1" opacity=".85"/></svg>
<div style="left:880px;top:222px;width:25px;height:21px;background:#e6e6e6;"></div>
<div style="left:881.7px;top:222px;width:21.5px;height:21px;background:#c6c6c6;"></div>
<svg style="position:absolute;left:886.5px;top:227px;" width="11" height="11" viewBox="0 0 11 11"><path d="M0.5 0V11M0 0.5H11" stroke="#6e6e6e" stroke-width="1" opacity=".85"/><path d="M2.5 0V11M0 2.5H11" stroke="#6e6e6e" stroke-width="1" opacity=".85"/><path d="M4.5 0V11M0 4.5H11" stroke="#6e6e6e" stroke-width="1" opacity=".85"/><path d="M6.5 0V11M0 6.5H11" stroke="#6e6e6e" stroke-width="1" opacity=".85"/><path d="M8.5 0V11M0 8.5H11" stroke="#6e6e6e" stroke-width="1" opacity=".85"/><path d="M10.5 0V11M0 10.5H11" stroke="#6e6e6e" stroke-width="1" opacity=".85"/></svg>
<div style="left:946px;top:222px;width:25px;height:21px;background:#e6e6e6;"></div>
<div style="left:947.7px;top:222px;width:21.5px;height:21px;background:#c6c6c6;"></div>
<svg style="position:absolute;left:952.5px;top:227px;" width="11" height="11" viewBox="0 0 11 11"><path d="M0.5 0V11M0 0.5H11" stroke="#6e6e6e" stroke-width="1" opacity=".85"/><path d="M2.5 0V11M0 2.5H11" stroke="#6e6e6e" stroke-width="1" opacity=".85"/><path d="M4.5 0V11M0 4.5H11" stroke="#6e6e6e" stroke-width="1" opacity=".85"/><path d="M6.5 0V11M0 6.5H11" stroke="#6e6e6e" stroke-width="1" opacity=".85"/><path d="M8.5 0V11M0 8.5H11" stroke="#6e6e6e" stroke-width="1" opacity=".85"/><path d="M10.5 0V11M0 10.5H11" stroke="#6e6e6e" stroke-width="1" opacity=".85"/></svg>
<div style="left:1012px;top:222px;width:25px;height:21px;background:#e6e6e6;"></div>
<div style="left:1013.7px;top:222px;width:21.5px;height:21px;background:#c6c6c6;"></div>
<svg style="position:absolute;left:1018.5px;top:227px;" width="11" height="11" viewBox="0 0 11 11"><path d="M0.5 0V11M0 0.5H11" stroke="#6e6e6e" stroke-width="1" opacity=".85"/><path d="M2.5 0V11M0 2.5H11" stroke="#6e6e6e" stroke-width="1" opacity=".85"/><path d="M4.5 0V11M0 4.5H11" stroke="#6e6e6e" stroke-width="1" opacity=".85"/><path d="M6.5 0V11M0 6.5H11" stroke="#6e6e6e" stroke-width="1" opacity=".85"/><path d="M8.5 0V11M0 8.5H11" stroke="#6e6e6e" stroke-width="1" opacity=".85"/><path d="M10.5 0V11M0 10.5H11" stroke="#6e6e6e" stroke-width="1" opacity=".85"/></svg>
<div style="left:1077px;top:222px;width:25px;height:21px;background:#e6e6e6;"></div>
<div style="left:1078.7px;top:222px;width:21.5px;height:21px;background:#c6c6c6;"></div>
<svg style="position:absolute;left:1083.5px;top:227px;" width="11" height="11" viewBox="0 0 11 11"><path d="M0.5 0V11M0 0.5H11" stroke="#6e6e6e" stroke-width="1" opacity=".85"/><path d="M2.5 0V11M0 2.5H11" stroke="#6e6e6e" stroke-width="1" opacity=".85"/><path d="M4.5 0V11M0 4.5H11" stroke="#6e6e6e" stroke-width="1" opacity=".85"/><path d="M6.5 0V11M0 6.5H11" stroke="#6e6e6e" stroke-width="1" opacity=".85"/><path d="M8.5 0V11M0 8.5H11" stroke="#6e6e6e" stroke-width="1" opacity=".85"/><path d="M10.5 0V11M0 10.5H11" stroke="#6e6e6e" stroke-width="1" opacity=".85"/></svg>
<div style="left:1143px;top:222px;width:25px;height:21px;background:#e6e6e6;"></div>
<div style="left:1144.7px;top:222px;width:21.5px;height:21px;background:#c6c6c6;"></div>
<svg style="position:absolute;left:1149.5px;top:227px;" width="11" height="11" viewBox="0 0 11 11"><path d="M0.5 0V11M0 0.5H11" stroke="#6e6e6e" stroke-width="1" opacity=".85"/><path d="M2.5 0V11M0 2.5H11" stroke="#6e6e6e" stroke-width="1" opacity=".85"/><path d="M4.5 0V11M0 4.5H11" stroke="#6e6e6e" stroke-width="1" opacity=".85"/><path d="M6.5 0V11M0 6.5H11" stroke="#6e6e6e" stroke-width="1" opacity=".85"/><path d="M8.5 0V11M0 8.5H11" stroke="#6e6e6e" stroke-width="1" opacity=".85"/><path d="M10.5 0V11M0 10.5H11" stroke="#6e6e6e" stroke-width="1" opacity=".85"/></svg>
<div style="left:1209px;top:222px;width:25px;height:21px;background:#e6e6e6;"></div>
<div style="left:1210.7px;top:222px;width:21.5px;height:21px;background:#c6c6c6;"></div>
<svg style="position:absolute;left:1215.5px;top:227px;" width="11" height="11" viewBox="0 0 11 11"><path d="M0.5 0V11M0 0.5H11" stroke="#6e6e6e" stroke-width="1" opacity=".85"/><path d="M2.5 0V11M0 2.5H11" stroke="#6e6e6e" stroke-width="1" opacity=".85"/><path d="M4.5 0V11M0 4.5H11" stroke="#6e6e6e" stroke-width="1" opacity=".85"/><path d="M6.5 0V11M0 6.5H11" stroke="#6e6e6e" stroke-width="1" opacity=".85"/><path d="M8.5 0V11M0 8.5H11" stroke="#6e6e6e" stroke-width="1" opacity=".85"/><path d="M10.5 0V11M0 10.5H11" stroke="#6e6e6e" stroke-width="1" opacity=".85"/></svg>
<div style="left:1275px;top:222px;width:25px;height:21px;background:#e6e6e6;"></div>
<div style="left:1276.7px;top:222px;width:21.5px;height:21px;background:#c6c6c6;"></div>
<svg style="position:absolute;left:1281.5px;top:227px;" width="11" height="11" viewBox="0 0 11 11"><path d="M0.5 0V11M0 0.5H11" stroke="#6e6e6e" stroke-width="1" opacity=".85"/><path d="M2.5 0V11M0 2.5H11" stroke="#6e6e6e" stroke-width="1" opacity=".85"/><path d="M4.5 0V11M0 4.5H11" stroke="#6e6e6e" stroke-width="1" opacity=".85"/><path d="M6.5 0V11M0 6.5H11" stroke="#6e6e6e" stroke-width="1" opacity=".85"/><path d="M8.5 0V11M0 8.5H11" stroke="#6e6e6e" stroke-width="1" opacity=".85"/><path d="M10.5 0V11M0 10.5H11" stroke="#6e6e6e" stroke-width="1" opacity=".85"/></svg>
<div style="left:1337px;top:222px;width:25px;height:21px;background:#e6e6e6;"></div>
<div style="left:1338.7px;top:222px;width:21.5px;height:21px;background:#c6c6c6;"></div>
<svg style="position:absolute;left:1343.5px;top:227px;" width="11" height="11" viewBox="0 0 11 11"><path d="M0.5 0V11M0 0.5H11" stroke="#6e6e6e" stroke-width="1" opacity=".85"/><path d="M2.5 0V11M0 2.5H11" stroke="#6e6e6e" stroke-width="1" opacity=".85"/><path d="M4.5 0V11M0 4.5H11" stroke="#6e6e6e" stroke-width="1" opacity=".85"/><path d="M6.5 0V11M0 6.5H11" stroke="#6e6e6e" stroke-width="1" opacity=".85"/><path d="M8.5 0V11M0 8.5H11" stroke="#6e6e6e" stroke-width="1" opacity=".85"/><path d="M10.5 0V11M0 10.5H11" stroke="#6e6e6e" stroke-width="1" opacity=".85"/></svg>
<div style="left:1385px;top:222px;width:25px;height:21px;background:#e6e6e6;"></div>
<div style="left:1386.7px;top:222px;width:21.5px;height:21px;background:#c6c6c6;"></div>
<svg style="position:absolute;left:1391.5px;top:227px;" width="11" height="11" viewBox="0 0 11 11"><path d="M0.5 0V11M0 0.5H11" stroke="#6e6e6e" stroke-width="1" opacity=".85"/><path d="M2.5 0V11M0 2.5H11" stroke="#6e6e6e" stroke-width="1" opacity=".85"/><path d="M4.5 0V11M0 4.5H11" stroke="#6e6e6e" stroke-width="1" opacity=".85"/><path d="M6.5 0V11M0 6.5H11" stroke="#6e6e6e" stroke-width="1" opacity=".85"/><path d="M8.5 0V11M0 8.5H11" stroke="#6e6e6e" stroke-width="1" opacity=".85"/><path d="M10.5 0V11M0 10.5H11" stroke="#6e6e6e" stroke-width="1" opacity=".85"/></svg>
<div style="left:1434px;top:222px;width:25px;height:21px;background:#e6e6e6;"></div>
<div style="left:1435.7px;top:222px;width:21.5px;height:21px;background:#c6c6c6;"></div>
<svg style="position:absolute;left:1440.5px;top:227px;" width="11" height="11" viewBox="0 0 11 11"><path d="M0.5 0V11M0 0.5H11" stroke="#6e6e6e" stroke-width="1" opacity=".85"/><path d="M2.5 0V11M0 2.5H11" stroke="#6e6e6e" stroke-width="1" opacity=".85"/><path d="M4.5 0V11M0 4.5H11" stroke="#6e6e6e" stroke-width="1" opacity=".85"/><path d="M6.5 0V11M0 6.5H11" stroke="#6e6e6e" stroke-width="1" opacity=".85"/><path d="M8.5 0V11M0 8.5H11" stroke="#6e6e6e" stroke-width="1" opacity=".85"/><path d="M10.5 0V11M0 10.5H11" stroke="#6e6e6e" stroke-width="1" opacity=".85"/></svg>
<div style="left:1483px;top:222px;width:25px;height:21px;background:#e6e6e6;"></div>
<div style="left:1484.7px;top:222px;width:21.5px;height:21px;background:#c6c6c6;"></div>
<svg style="position:absolute;left:1489.5px;top:227px;" width="11" height="11" viewBox="0 0 11 11"><path d="M0.5 0V11M0 0.5H11" stroke="#6e6e6e" stroke-width="1" opacity=".85"/><path d="M2.5 0V11M0 2.5H11" stroke="#6e6e6e" stroke-width="1" opacity=".85"/><path d="M4.5 0V11M0 4.5H11" stroke="#6e6e6e" stroke-width="1" opacity=".85"/><path d="M6.5 0V11M0 6.5H11" stroke="#6e6e6e" stroke-width="1" opacity=".85"/><path d="M8.5 0V11M0 8.5H11" stroke="#6e6e6e" stroke-width="1" opacity=".85"/><path d="M10.5 0V11M0 10.5H11" stroke="#6e6e6e" stroke-width="1" opacity=".85"/></svg>
<svg style="position:absolute;left:283px;top:219px;" width="13" height="33" viewBox="0 0 13 33"><path d="M0.500 0.500H12.500V5.500L6.500 11.500L0.500 5.500Z" fill="#fff" stroke="#8e8e8e" stroke-width="1"/><path d="M0.500 26V20L6.500 14L12.500 20V26Z" fill="#fff" stroke="#8e8e8e" stroke-width="1"/><rect x="0.500" y="26" width="12" height="6.500" fill="#fff" stroke="#8e8e8e" stroke-width="1"/></svg>
<svg style="position:absolute;left:560px;top:233px;" width="12" height="13" viewBox="0 0 12 13"><path d="M0.5 11.5V6L6 0.7L11.5 6V11.5Z" fill="#fff" stroke="#8e8e8e" stroke-width="1"/></svg>
<div style="left:5px;top:252px;width:22px;height:723px;background:#ffffff;"></div>
<div style="left:5px;top:901px;width:22px;height:74px;background:#c6c6c6;"></div>
<span class="t" style="left:-4px;top:287.4px;width:40px;text-align:center;font-size:14.3px;line-height:14.3px;color:#595959;transform:rotate(-90deg)">7</span>
<span class="t" style="left:-4px;top:343.9px;width:40px;text-align:center;font-size:14.3px;line-height:14.3px;color:#595959;transform:rotate(-90deg)">8</span>
<span class="t" style="left:-4px;top:400.5px;width:40px;text-align:center;font-size:14.3px;line-height:14.3px;color:#595959;transform:rotate(-90deg)">9</span>
<span class="t" style="left:-4px;top:457.0px;width:40px;text-align:center;font-size:14.3px;line-height:14.3px;color:#595959;transform:rotate(-90deg)">10</span>
<span class="t" style="left:-4px;top:513.6px;width:40px;text-align:center;font-size:14.3px;line-height:14.3px;color:#595959;transform:rotate(-90deg)">11</span>
<span class="t" style="left:-4px;top:570.1px;width:40px;text-align:center;font-size:14.3px;line-height:14.3px;color:#595959;transform:rotate(-90deg)">12</span>
<span class="t" style="left:-4px;top:626.6px;width:40px;text-align:center;font-size:14.3px;line-height:14.3px;color:#595959;transform:rotate(-90deg)">13</span>
<span class="t" style="left:-4px;top:683.2px;width:40px;text-align:center;font-size:14.3px;line-height:14.3px;color:#595959;transform:rotate(-90deg)">14</span>
<span class="t" style="left:-4px;top:739.8px;width:40px;text-align:center;font-size:14.3px;line-height:14.3px;color:#595959;transform:rotate(-90deg)">15</span>
<span class="t" style="left:-4px;top:796.3px;width:40px;text-align:center;font-size:14.3px;line-height:14.3px;color:#595959;transform:rotate(-90deg)">16</span>
<span class="t" style="left:-4px;top:852.9px;width:40px;text-align:center;font-size:14.3px;line-height:14.3px;color:#595959;transform:rotate(-90deg)">17</span>
<span class="t" style="left:-4px;top:909.4px;width:40px;text-align:center;font-size:14.3px;line-height:14.3px;color:#595959;transform:rotate(-90deg)">18</span>
<span class="t" style="left:-4px;top:965.9px;width:40px;text-align:center;font-size:14.3px;line-height:14.3px;color:#595959;transform:rotate(-90deg)">19</span>
<svg style="position:absolute;left:0px;top:0px;" width="1" height="1" viewBox="0 0 1 1"><path d="M12 266.2H21M15 280.4H17.5M15 308.6H17.5M12 322.8H21M15 336.9H17.5M15 365.2H17.5M12 379.3H21M15 393.5H17.5M15 421.7H17.5M12 435.9H21M15 450.0H17.5M15 478.3H17.5M12 492.4H21M15 506.6H17.5M15 534.8H17.5M12 549.0H21M15 563.1H17.5M15 591.4H17.5M12 605.5H21M15 619.7H17.5M15 647.9H17.5M12 662.1H21M15 676.2H17.5M15 704.5H17.5M12 718.6H21M15 732.8H17.5M15 761.0H17.5M12 775.2H21M15 789.3H17.5M15 817.6H17.5M12 831.7H21M15 845.9H17.5M15 874.1H17.5M12 888.3H21M15 902.4H17.5M15 930.7H17.5M12 944.8H21M15 959.0H17.5" stroke="#595959" stroke-width="1" fill="none"/></svg>
<div style="left:5px;top:257px;width:22px;height:7px;background:#c6c6c6;"></div>
<div style="left:5px;top:285px;width:22px;height:7px;background:#c6c6c6;"></div>
<div style="left:5px;top:315px;width:22px;height:7px;background:#c6c6c6;"></div>
<div style="left:5px;top:357px;width:22px;height:7px;background:#c6c6c6;"></div>
<div style="left:5px;top:387px;width:22px;height:7px;background:#c6c6c6;"></div>
<div style="left:5px;top:430px;width:22px;height:7px;background:#c6c6c6;"></div>
<div style="left:5px;top:459px;width:22px;height:7px;background:#c6c6c6;"></div>
<div style="left:5px;top:502px;width:22px;height:7px;background:#c6c6c6;"></div>
<div style="left:5px;top:532px;width:22px;height:7px;background:#c6c6c6;"></div>
<div style="left:5px;top:561px;width:22px;height:7px;background:#c6c6c6;"></div>
<div style="left:5px;top:624px;width:22px;height:7px;background:#c6c6c6;"></div>
<div style="left:5px;top:654px;width:22px;height:7px;background:#c6c6c6;"></div>
<div style="left:5px;top:697px;width:22px;height:7px;background:#c6c6c6;"></div>
<div style="left:5px;top:739px;width:22px;height:7px;background:#c6c6c6;"></div>
<div style="left:5px;top:769px;width:22px;height:7px;background:#c6c6c6;"></div>
<div style="left:5px;top:811px;width:22px;height:7px;background:#c6c6c6;"></div>
<div style="left:5px;top:841px;width:22px;height:7px;background:#c6c6c6;"></div>
<div style="left:5px;top:883px;width:22px;height:7px;background:#c6c6c6;"></div>
<div style="left:1894px;top:219px;width:25px;height:24px;background:#c2c2c2;"></div>
<div style="left:1895px;top:220px;width:23px;height:22px;background:#ffffff;"></div>
<svg style="position:absolute;left:1901px;top:227px;" width="11" height="7" viewBox="0 0 11 7"><path d="M0 6.5L5.5 0.5L11 6.5Z" fill="#777"/></svg>
<div style="left:1894px;top:685px;width:25px;height:58px;background:#c2c2c2;"></div>
<div style="left:1895px;top:686px;width:23px;height:56px;background:#ffffff;"></div>
<div style="left:1894px;top:950px;width:25px;height:24px;background:#c2c2c2;"></div>
<div style="left:1895px;top:951px;width:23px;height:22px;background:#ffffff;"></div>
<svg style="position:absolute;left:1901px;top:959px;" width="11" height="7" viewBox="0 0 11 7"><path d="M0 0.5H11L5.5 6.5Z" fill="#777"/></svg>
<div style="left:193px;top:252px;width:1px;height:7px;background:#000;"></div>
<div style="left:193px;top:258px;width:1348px;height:1px;background:#000;"></div>
<div style="left:193px;top:286px;width:1348px;height:1px;background:#000;"></div>
<div style="left:278px;top:316px;width:1263px;height:1px;background:#000;"></div>
<div style="left:278px;top:358px;width:1263px;height:1px;background:#000;"></div>
<div style="left:278px;top:388px;width:1263px;height:1px;background:#000;"></div>
<div style="left:278px;top:431px;width:1263px;height:1px;background:#000;"></div>
<div style="left:278px;top:460px;width:1263px;height:1px;background:#000;"></div>
<div style="left:193px;top:503px;width:1348px;height:1px;background:#000;"></div>
<div style="left:193px;top:533px;width:1348px;height:1px;background:#000;"></div>
<div style="left:193px;top:562px;width:1348px;height:1px;background:#000;"></div>
<div style="left:278px;top:625px;width:1263px;height:1px;background:#000;"></div>
<div style="left:278px;top:655px;width:1263px;height:1px;background:#000;"></div>
<div style="left:278px;top:698px;width:1263px;height:1px;background:#000;"></div>
<div style="left:278px;top:740px;width:1263px;height:1px;background:#000;"></div>
<div style="left:278px;top:770px;width:1263px;height:1px;background:#000;"></div>
<div style="left:278px;top:812px;width:1263px;height:1px;background:#000;"></div>
<div style="left:193px;top:842px;width:1348px;height:1px;background:#000;"></div>
<div style="left:193px;top:884px;width:1348px;height:1px;background:#000;"></div>
<div style="left:193px;top:258px;width:1px;height:627px;background:#000;"></div>
<div style="left:278px;top:286px;width:1px;height:599px;background:#000;"></div>
<div style="left:576px;top:286px;width:1px;height:599px;background:#000;"></div>
<div style="left:645px;top:286px;width:1px;height:599px;background:#000;"></div>
<div style="left:716px;top:286px;width:1px;height:599px;background:#000;"></div>
<div style="left:771px;top:286px;width:1px;height:599px;background:#000;"></div>
<div style="left:848px;top:286px;width:1px;height:599px;background:#000;"></div>
<div style="left:893px;top:286px;width:1px;height:599px;background:#000;"></div>
<div style="left:959px;top:286px;width:1px;height:599px;background:#000;"></div>
<div style="left:1025px;top:286px;width:1px;height:599px;background:#000;"></div>
<div style="left:1090px;top:286px;width:1px;height:599px;background:#000;"></div>
<div style="left:1156px;top:286px;width:1px;height:599px;background:#000;"></div>
<div style="left:1222px;top:286px;width:1px;height:599px;background:#000;"></div>
<div style="left:1288px;top:286px;width:1px;height:599px;background:#000;"></div>
<div style="left:1350px;top:286px;width:1px;height:599px;background:#000;"></div>
<div style="left:1398px;top:286px;width:1px;height:599px;background:#000;"></div>
<div style="left:1447px;top:286px;width:1px;height:599px;background:#000;"></div>
<div style="left:1496px;top:286px;width:1px;height:599px;background:#000;"></div>
<span class="t s" style="left:785px;top:262px;font-weight:700;font-style:italic;letter-spacing:0.039px;">Вибіркові·компоненти·за··спеціальністю</span>
<span class="t s" style="left:1150.5px;top:262px;font-size:22.5px;line-height:22.5px;">¤</span>
<span class="t s c" style="left:137.5px;top:364px"><b>ВК·1<i>¶</i></b></span>
<span class="t s c" style="left:137.5px;top:385px"><b>ВК·2<i>¶</i></b></span>
<span class="t s c" style="left:137.3px;top:404px"><b><i><u class=k>¤</u></i></b></span>
<span class="t s c" style="left:137.3px;top:508px"><b><i><u class=k>¤</u></i></b></span>
<span class="t s c" style="left:137.3px;top:538px"><b><i><u class=k>¤</u></i></b></span>
<span class="t s c" style="left:137.5px;top:671px"><b>ВК·3<i>¶</i></b></span>
<span class="t s c" style="left:137.5px;top:692px"><b>ВК·4<i>·¶</i></b></span>
<span class="t s c" style="left:137.3px;top:711px"><b><i><u class=k>¤</u></i></b></span>
<span class="t s c" style="left:137.3px;top:853px"><b><i><u class=k>¤</u></i></b></span>
<span class="t s" style="left:290px;top:291px;">Маркетинг·в·ЗЕД<i class=k>¤</i></span>
<span class="t s" style="left:290px;top:317px;">Міжнародні·</span>
<span class="t s r" style="left:271px;top:317px">транспортні·</span>
<span class="t s" style="left:290px;top:337px;">перевезення<i class=k>¤</i></span>
<span class="t s" style="left:290px;top:363px;">Інвестиційний·аналіз<i class=k>¤</i></span>
<span class="t s" style="left:290px;top:390px;">Управління·</span>
<span class="t s r" style="left:271px;top:390px">виробничими·</span>
<span class="t s" style="left:290px;top:410px;">системами<i class=k>¤</i></span>
<span class="t s" style="left:290px;top:436px;">Маркетинговий·менеджмент<i class=k>¤</i></span>
<span class="t s" style="left:290px;top:461px;">Бізнес-планування·</span>
<span class="t s r" style="left:271px;top:461px">діяльності·</span>
<span class="t s" style="left:290px;top:481px;">підприємств<i class=k>¤</i></span>
<div style="left:290px;top:508px;width:220px;height:21px;background:#ffff00;"></div>
<span class="t s" style="left:290px;top:508px;">Інноваційна·біоекономіка<i class=k>¤</i></span>
<div style="left:290px;top:538px;width:151px;height:21px;background:#ffff00;"></div>
<span class="t s" style="left:290px;top:538px;">ESG-менеджмент<i class=k>¤</i></span>
<span class="t s" style="left:290px;top:563px;">Митне·</span>
<span class="t s r" style="left:271px;top:563px">регулювання·</span>
<span class="t s" style="left:290px;top:584px;">зовнішньоекономічних·</span>
<span class="t s" style="left:290px;top:604px;">операцій<i class=k>¤</i></span>
<span class="t s" style="left:290px;top:630px;">Кар’єрний·коучинг<i class=k>¤</i></span>
<span class="t s" style="left:290px;top:656px;">Міжнародна·</span>
<span class="t s r" style="left:271px;top:656px">економічна·</span>
<span class="t s" style="left:290px;top:676px;">статистика<i class=k>¤</i></span>
<span class="t s" style="left:290px;top:699px;">Управління·</span>
<span class="t s r" style="left:271px;top:699px">емоційним·</span>
<span class="t s" style="left:290px;top:719px;">інтелектом<i class=k>¤</i></span>
<span class="t s" style="left:290px;top:745px;">Менеджмент·організацій<i class=k>¤</i></span>
<span class="t s" style="left:290px;top:771px;">Управління·</span>
<span class="t s r" style="left:271px;top:771px">ресурсами·</span>
<span class="t s" style="left:290px;top:791px;">організації<i class=k>¤</i></span>
<div style="left:290px;top:816.3px;width:244px;height:21px;background:#ffff00;"></div>
<span class="t s" style="left:290px;top:816px;">SMART-управління·містами<i class=k>¤</i></span>
<div style="left:290px;top:843px;width:276px;height:21px;background:#ffff00;"></div>
<div style="left:290px;top:863px;width:101px;height:21px;background:#ffff00;"></div>
<span class="t s" style="left:290px;top:843px;">Менеджмент·</span>
<span class="t s r" style="left:271px;top:843px">інклюзивного·</span>
<span class="t s" style="left:290px;top:863px;">середовища<i class=k>¤</i></span>
<svg style="position:absolute;left:384px;top:648px;" width="72" height="5" viewBox="0 0 72 5"><path d="M0 2.5 q2 -3 4 0 q2 3 4 0 q2 -3 4 0 q2 3 4 0 q2 -3 4 0 q2 3 4 0 q2 -3 4 0 q2 3 4 0 q2 -3 4 0 q2 3 4 0 q2 -3 4 0 q2 3 4 0 q2 -3 4 0 q2 3 4 0 q2 -3 4 0 q2 3 4 0 q2 -3 4 0 q2 3 4 0" fill="none" stroke="#e81123" stroke-width="1.1"/></svg>
<span class="t s c" style="left:511px;top:291px"><b>150<i><u class=k>¤</u></i></b></span>
<span class="t s c" style="left:581px;top:291px"><b>5<i><u class=k>¤</u></i></b></span>
<span class="t s c" style="left:644px;top:291px"><b>5<i><u class=k>¤</u></i></b></span>
<span class="t s" style="left:807.7px;top:291px;">°</span>
<span class="t s" style="left:813.5px;top:291px;font-size:22.5px;line-height:22.5px;">¤</span>
<span class="t s" style="left:868.7px;top:291px;">°</span>
<span class="t s" style="left:874.5px;top:291px;font-size:22.5px;line-height:22.5px;">¤</span>
<span class="t s c" style="left:826.5px;top:291px"><b>60<i><u class=k>¤</u></i></b></span>
<span class="t s c" style="left:892.5px;top:291px"><b>30<i><u class=k>¤</u></i></b></span>
<span class="t s" style="left:1055.7px;top:291px;">°</span>
<span class="t s" style="left:1061.5px;top:291px;font-size:22.5px;line-height:22.5px;">¤</span>
<span class="t s c" style="left:1023.5px;top:291px"><b>30<i><u class=k>¤</u></i></b></span>
<span class="t s c" style="left:1089.5px;top:291px"><b>90<i><u class=k>¤</u></i></b></span>
<span class="t s" style="left:1253.2px;top:291px;">°</span>
<span class="t s" style="left:1259px;top:291px;font-size:22.5px;line-height:22.5px;">¤</span>
<span class="t s" style="left:1317.2px;top:291px;">°</span>
<span class="t s" style="left:1323px;top:291px;font-size:22.5px;line-height:22.5px;">¤</span>
<span class="t s" style="left:1372.2px;top:291px;">°</span>
<span class="t s" style="left:1378px;top:291px;font-size:22.5px;line-height:22.5px;">¤</span>
<span class="t s" style="left:1420.7px;top:291px;">°</span>
<span class="t s" style="left:1426.5px;top:291px;font-size:22.5px;line-height:22.5px;">¤</span>
<span class="t s" style="left:1469.7px;top:291px;">°</span>
<span class="t s" style="left:1475.5px;top:291px;font-size:22.5px;line-height:22.5px;">¤</span>
<span class="t s" style="left:1520.2px;top:291px;">°</span>
<span class="t s" style="left:1526px;top:291px;font-size:22.5px;line-height:22.5px;">¤</span>
<span class="t s c" style="left:511px;top:327px"><b>150<i><u class=k>¤</u></i></b></span>
<span class="t s c" style="left:581px;top:327px"><b>5<i><u class=k>¤</u></i></b></span>
<span class="t s c" style="left:644px;top:327px"><b>5<i><u class=k>¤</u></i></b></span>
<span class="t s" style="left:807.7px;top:327px;">°</span>
<span class="t s" style="left:813.5px;top:327px;font-size:22.5px;line-height:22.5px;">¤</span>
<span class="t s" style="left:868.7px;top:327px;">°</span>
<span class="t s" style="left:874.5px;top:327px;font-size:22.5px;line-height:22.5px;">¤</span>
<span class="t s c" style="left:826.5px;top:327px"><b>60<i><u class=k>¤</u></i></b></span>
<span class="t s c" style="left:892.5px;top:327px"><b>30<i><u class=k>¤</u></i></b></span>
<span class="t s" style="left:1055.7px;top:327px;">°</span>
<span class="t s" style="left:1061.5px;top:327px;font-size:22.5px;line-height:22.5px;">¤</span>
<span class="t s c" style="left:1023.5px;top:327px"><b>30<i><u class=k>¤</u></i></b></span>
<span class="t s c" style="left:1089.5px;top:327px"><b>90<i><u class=k>¤</u></i></b></span>
<span class="t s" style="left:1253.2px;top:327px;">°</span>
<span class="t s" style="left:1259px;top:327px;font-size:22.5px;line-height:22.5px;">¤</span>
<span class="t s" style="left:1317.2px;top:327px;">°</span>
<span class="t s" style="left:1323px;top:327px;font-size:22.5px;line-height:22.5px;">¤</span>
<span class="t s" style="left:1372.2px;top:327px;">°</span>
<span class="t s" style="left:1378px;top:327px;font-size:22.5px;line-height:22.5px;">¤</span>
<span class="t s" style="left:1420.7px;top:327px;">°</span>
<span class="t s" style="left:1426.5px;top:327px;font-size:22.5px;line-height:22.5px;">¤</span>
<span class="t s" style="left:1469.7px;top:327px;">°</span>
<span class="t s" style="left:1475.5px;top:327px;font-size:22.5px;line-height:22.5px;">¤</span>
<span class="t s" style="left:1520.2px;top:327px;">°</span>
<span class="t s" style="left:1526px;top:327px;font-size:22.5px;line-height:22.5px;">¤</span>
<span class="t s c" style="left:511px;top:363px"><b>150<i><u class=k>¤</u></i></b></span>
<span class="t s c" style="left:581px;top:363px"><b>5<i><u class=k>¤</u></i></b></span>
<span class="t s c" style="left:644px;top:363px"><b>5<i><u class=k>¤</u></i></b></span>
<span class="t s" style="left:807.7px;top:363px;">°</span>
<span class="t s" style="left:813.5px;top:363px;font-size:22.5px;line-height:22.5px;">¤</span>
<span class="t s" style="left:868.7px;top:363px;">°</span>
<span class="t s" style="left:874.5px;top:363px;font-size:22.5px;line-height:22.5px;">¤</span>
<span class="t s c" style="left:826.5px;top:363px"><b>60<i><u class=k>¤</u></i></b></span>
<span class="t s c" style="left:892.5px;top:363px"><b>30<i><u class=k>¤</u></i></b></span>
<span class="t s" style="left:1055.7px;top:363px;">°</span>
<span class="t s" style="left:1061.5px;top:363px;font-size:22.5px;line-height:22.5px;">¤</span>
<span class="t s c" style="left:1023.5px;top:363px"><b>30<i><u class=k>¤</u></i></b></span>
<span class="t s c" style="left:1089.5px;top:363px"><b>90<i><u class=k>¤</u></i></b></span>
<span class="t s" style="left:1253.2px;top:363px;">°</span>
<span class="t s" style="left:1259px;top:363px;font-size:22.5px;line-height:22.5px;">¤</span>
<span class="t s" style="left:1317.2px;top:363px;">°</span>
<span class="t s" style="left:1323px;top:363px;font-size:22.5px;line-height:22.5px;">¤</span>
<span class="t s" style="left:1372.2px;top:363px;">°</span>
<span class="t s" style="left:1378px;top:363px;font-size:22.5px;line-height:22.5px;">¤</span>
<span class="t s" style="left:1420.7px;top:363px;">°</span>
<span class="t s" style="left:1426.5px;top:363px;font-size:22.5px;line-height:22.5px;">¤</span>
<span class="t s" style="left:1469.7px;top:363px;">°</span>
<span class="t s" style="left:1475.5px;top:363px;font-size:22.5px;line-height:22.5px;">¤</span>
<span class="t s" style="left:1520.2px;top:363px;">°</span>
<span class="t s" style="left:1526px;top:363px;font-size:22.5px;line-height:22.5px;">¤</span>
<span class="t s c" style="left:511px;top:400px"><b>150<i><u class=k>¤</u></i></b></span>
<span class="t s c" style="left:581px;top:400px"><b>5<i><u class=k>¤</u></i></b></span>
<span class="t s c" style="left:644px;top:400px"><b>5<i><u class=k>¤</u></i></b></span>
<span class="t s" style="left:807.7px;top:400px;">°</span>
<span class="t s" style="left:813.5px;top:400px;font-size:22.5px;line-height:22.5px;">¤</span>
<span class="t s" style="left:868.7px;top:400px;">°</span>
<span class="t s" style="left:874.5px;top:400px;font-size:22.5px;line-height:22.5px;">¤</span>
<span class="t s c" style="left:826.5px;top:400px"><b>60<i><u class=k>¤</u></i></b></span>
<span class="t s c" style="left:892.5px;top:400px"><b>30<i><u class=k>¤</u></i></b></span>
<span class="t s" style="left:1055.7px;top:400px;">°</span>
<span class="t s" style="left:1061.5px;top:400px;font-size:22.5px;line-height:22.5px;">¤</span>
<span class="t s c" style="left:1023.5px;top:400px"><b>30<i><u class=k>¤</u></i></b></span>
<span class="t s c" style="left:1089.5px;top:400px"><b>90<i><u class=k>¤</u></i></b></span>
<span class="t s" style="left:1253.2px;top:400px;">°</span>
<span class="t s" style="left:1259px;top:400px;font-size:22.5px;line-height:22.5px;">¤</span>
<span class="t s" style="left:1317.2px;top:400px;">°</span>
<span class="t s" style="left:1323px;top:400px;font-size:22.5px;line-height:22.5px;">¤</span>
<span class="t s" style="left:1372.2px;top:400px;">°</span>
<span class="t s" style="left:1378px;top:400px;font-size:22.5px;line-height:22.5px;">¤</span>
<span class="t s" style="left:1420.7px;top:400px;">°</span>
<span class="t s" style="left:1426.5px;top:400px;font-size:22.5px;line-height:22.5px;">¤</span>
<span class="t s" style="left:1469.7px;top:400px;">°</span>
<span class="t s" style="left:1475.5px;top:400px;font-size:22.5px;line-height:22.5px;">¤</span>
<span class="t s" style="left:1520.2px;top:400px;">°</span>
<span class="t s" style="left:1526px;top:400px;font-size:22.5px;line-height:22.5px;">¤</span>
<span class="t s c" style="left:511px;top:436px"><b>150<i><u class=k>¤</u></i></b></span>
<span class="t s c" style="left:581px;top:436px"><b>5<i><u class=k>¤</u></i></b></span>
<span class="t s c" style="left:644px;top:436px"><b>5<i><u class=k>¤</u></i></b></span>
<span class="t s" style="left:807.7px;top:436px;">°</span>
<span class="t s" style="left:813.5px;top:436px;font-size:22.5px;line-height:22.5px;">¤</span>
<span class="t s" style="left:868.7px;top:436px;">°</span>
<span class="t s" style="left:874.5px;top:436px;font-size:22.5px;line-height:22.5px;">¤</span>
<span class="t s c" style="left:826.5px;top:436px"><b>60<i><u class=k>¤</u></i></b></span>
<span class="t s c" style="left:892.5px;top:436px"><b>30<i><u class=k>¤</u></i></b></span>
<span class="t s" style="left:1055.7px;top:436px;">°</span>
<span class="t s" style="left:1061.5px;top:436px;font-size:22.5px;line-height:22.5px;">¤</span>
<span class="t s c" style="left:1023.5px;top:436px"><b>30<i><u class=k>¤</u></i></b></span>
<span class="t s c" style="left:1089.5px;top:436px"><b>90<i><u class=k>¤</u></i></b></span>
<span class="t s" style="left:1253.2px;top:436px;">°</span>
<span class="t s" style="left:1259px;top:436px;font-size:22.5px;line-height:22.5px;">¤</span>
<span class="t s" style="left:1317.2px;top:436px;">°</span>
<span class="t s" style="left:1323px;top:436px;font-size:22.5px;line-height:22.5px;">¤</span>
<span class="t s" style="left:1372.2px;top:436px;">°</span>
<span class="t s" style="left:1378px;top:436px;font-size:22.5px;line-height:22.5px;">¤</span>
<span class="t s" style="left:1420.7px;top:436px;">°</span>
<span class="t s" style="left:1426.5px;top:436px;font-size:22.5px;line-height:22.5px;">¤</span>
<span class="t s" style="left:1469.7px;top:436px;">°</span>
<span class="t s" style="left:1475.5px;top:436px;font-size:22.5px;line-height:22.5px;">¤</span>
<span class="t s" style="left:1520.2px;top:436px;">°</span>
<span class="t s" style="left:1526px;top:436px;font-size:22.5px;line-height:22.5px;">¤</span>
<span class="t s c" style="left:511px;top:472px"><b>150<i><u class=k>¤</u></i></b></span>
<span class="t s c" style="left:581px;top:472px"><b>5<i><u class=k>¤</u></i></b></span>
<span class="t s c" style="left:644px;top:472px"><b>5<i><u class=k>¤</u></i></b></span>
<span class="t s" style="left:807.7px;top:472px;">°</span>
<span class="t s" style="left:813.5px;top:472px;font-size:22.5px;line-height:22.5px;">¤</span>
<span class="t s" style="left:868.7px;top:472px;">°</span>
<span class="t s" style="left:874.5px;top:472px;font-size:22.5px;line-height:22.5px;">¤</span>
<span class="t s c" style="left:826.5px;top:472px"><b>60<i><u class=k>¤</u></i></b></span>
<span class="t s c" style="left:892.5px;top:472px"><b>30<i><u class=k>¤</u></i></b></span>
<span class="t s" style="left:1055.7px;top:472px;">°</span>
<span class="t s" style="left:1061.5px;top:472px;font-size:22.5px;line-height:22.5px;">¤</span>
<span class="t s c" style="left:1023.5px;top:472px"><b>30<i><u class=k>¤</u></i></b></span>
<span class="t s c" style="left:1089.5px;top:472px"><b>90<i><u class=k>¤</u></i></b></span>
<span class="t s" style="left:1253.2px;top:472px;">°</span>
<span class="t s" style="left:1259px;top:472px;font-size:22.5px;line-height:22.5px;">¤</span>
<span class="t s" style="left:1317.2px;top:472px;">°</span>
<span class="t s" style="left:1323px;top:472px;font-size:22.5px;line-height:22.5px;">¤</span>
<span class="t s" style="left:1372.2px;top:472px;">°</span>
<span class="t s" style="left:1378px;top:472px;font-size:22.5px;line-height:22.5px;">¤</span>
<span class="t s" style="left:1420.7px;top:472px;">°</span>
<span class="t s" style="left:1426.5px;top:472px;font-size:22.5px;line-height:22.5px;">¤</span>
<span class="t s" style="left:1469.7px;top:472px;">°</span>
<span class="t s" style="left:1475.5px;top:472px;font-size:22.5px;line-height:22.5px;">¤</span>
<span class="t s" style="left:1520.2px;top:472px;">°</span>
<span class="t s" style="left:1526px;top:472px;font-size:22.5px;line-height:22.5px;">¤</span>
<span class="t s c" style="left:511px;top:508px"><b>150<i><u class=k>¤</u></i></b></span>
<span class="t s c" style="left:581px;top:508px"><b>5<i><u class=k>¤</u></i></b></span>
<span class="t s c" style="left:644px;top:508px"><b>5<i><u class=k>¤</u></i></b></span>
<span class="t s" style="left:807.7px;top:508px;">°</span>
<span class="t s" style="left:813.5px;top:508px;font-size:22.5px;line-height:22.5px;">¤</span>
<span class="t s" style="left:868.7px;top:508px;">°</span>
<span class="t s" style="left:874.5px;top:508px;font-size:22.5px;line-height:22.5px;">¤</span>
<span class="t s c" style="left:826.5px;top:508px"><b>60<i><u class=k>¤</u></i></b></span>
<span class="t s c" style="left:892.5px;top:508px"><b>30<i><u class=k>¤</u></i></b></span>
<span class="t s" style="left:1055.7px;top:508px;">°</span>
<span class="t s" style="left:1061.5px;top:508px;font-size:22.5px;line-height:22.5px;">¤</span>
<span class="t s c" style="left:1023.5px;top:508px"><b>30<i><u class=k>¤</u></i></b></span>
<span class="t s c" style="left:1089.5px;top:508px"><b>90<i><u class=k>¤</u></i></b></span>
<span class="t s" style="left:1253.2px;top:508px;">°</span>
<span class="t s" style="left:1259px;top:508px;font-size:22.5px;line-height:22.5px;">¤</span>
<span class="t s" style="left:1317.2px;top:508px;">°</span>
<span class="t s" style="left:1323px;top:508px;font-size:22.5px;line-height:22.5px;">¤</span>
<span class="t s" style="left:1372.2px;top:508px;">°</span>
<span class="t s" style="left:1378px;top:508px;font-size:22.5px;line-height:22.5px;">¤</span>
<span class="t s" style="left:1420.7px;top:508px;">°</span>
<span class="t s" style="left:1426.5px;top:508px;font-size:22.5px;line-height:22.5px;">¤</span>
<span class="t s" style="left:1469.7px;top:508px;">°</span>
<span class="t s" style="left:1475.5px;top:508px;font-size:22.5px;line-height:22.5px;">¤</span>
<span class="t s" style="left:1520.2px;top:508px;">°</span>
<span class="t s" style="left:1526px;top:508px;font-size:22.5px;line-height:22.5px;">¤</span>
<span class="t s c" style="left:511px;top:538px"><b>150<i><u class=k>¤</u></i></b></span>
<span class="t s c" style="left:581px;top:538px"><b>5<i><u class=k>¤</u></i></b></span>
<span class="t s c" style="left:644px;top:538px"><b>5<i><u class=k>¤</u></i></b></span>
<span class="t s" style="left:807.7px;top:538px;">°</span>
<span class="t s" style="left:813.5px;top:538px;font-size:22.5px;line-height:22.5px;">¤</span>
<span class="t s" style="left:868.7px;top:538px;">°</span>
<span class="t s" style="left:874.5px;top:538px;font-size:22.5px;line-height:22.5px;">¤</span>
<span class="t s c" style="left:826.5px;top:538px"><b>60<i><u class=k>¤</u></i></b></span>
<span class="t s c" style="left:892.5px;top:538px"><b>30<i><u class=k>¤</u></i></b></span>
<span class="t s" style="left:1055.7px;top:538px;">°</span>
<span class="t s" style="left:1061.5px;top:538px;font-size:22.5px;line-height:22.5px;">¤</span>
<span class="t s c" style="left:1023.5px;top:538px"><b>30<i><u class=k>¤</u></i></b></span>
<span class="t s c" style="left:1089.5px;top:538px"><b>90<i><u class=k>¤</u></i></b></span>
<span class="t s" style="left:1253.2px;top:538px;">°</span>
<span class="t s" style="left:1259px;top:538px;font-size:22.5px;line-height:22.5px;">¤</span>
<span class="t s" style="left:1317.2px;top:538px;">°</span>
<span class="t s" style="left:1323px;top:538px;font-size:22.5px;line-height:22.5px;">¤</span>
<span class="t s" style="left:1372.2px;top:538px;">°</span>
<span class="t s" style="left:1378px;top:538px;font-size:22.5px;line-height:22.5px;">¤</span>
<span class="t s" style="left:1420.7px;top:538px;">°</span>
<span class="t s" style="left:1426.5px;top:538px;font-size:22.5px;line-height:22.5px;">¤</span>
<span class="t s" style="left:1469.7px;top:538px;">°</span>
<span class="t s" style="left:1475.5px;top:538px;font-size:22.5px;line-height:22.5px;">¤</span>
<span class="t s" style="left:1520.2px;top:538px;">°</span>
<span class="t s" style="left:1526px;top:538px;font-size:22.5px;line-height:22.5px;">¤</span>
<span class="t s c" style="left:511px;top:584px"><b>180<i><u class=k>¤</u></i></b></span>
<span class="t s c" style="left:581px;top:584px"><b>6<i><u class=k>¤</u></i></b></span>
<span class="t s c" style="left:644px;top:584px"><b>6<i><u class=k>¤</u></i></b></span>
<span class="t s" style="left:807.7px;top:584px;">°</span>
<span class="t s" style="left:813.5px;top:584px;font-size:22.5px;line-height:22.5px;">¤</span>
<span class="t s" style="left:868.7px;top:584px;">°</span>
<span class="t s" style="left:874.5px;top:584px;font-size:22.5px;line-height:22.5px;">¤</span>
<span class="t s c" style="left:826.5px;top:584px"><b>60<i><u class=k>¤</u></i></b></span>
<span class="t s c" style="left:892.5px;top:584px"><b>30<i><u class=k>¤</u></i></b></span>
<span class="t s" style="left:1055.7px;top:584px;">°</span>
<span class="t s" style="left:1061.5px;top:584px;font-size:22.5px;line-height:22.5px;">¤</span>
<span class="t s c" style="left:1023.5px;top:584px"><b>30<i><u class=k>¤</u></i></b></span>
<span class="t s c" style="left:1089.5px;top:584px"><b>120<i><u class=k>¤</u></i></b></span>
<span class="t s" style="left:1253.2px;top:584px;">°</span>
<span class="t s" style="left:1259px;top:584px;font-size:22.5px;line-height:22.5px;">¤</span>
<span class="t s c" style="left:1219.5px;top:584px"><b><i><u class=k>¤</u></i></b></span>
<span class="t s c" style="left:1274.5px;top:584px"><b><i><u class=k>¤</u></i></b></span>
<span class="t s c" style="left:1323px;top:584px"><b><i><u class=k>¤</u></i></b></span>
<span class="t s c" style="left:1372px;top:584px"><b><i><u class=k>¤</u></i></b></span>
<span class="t s c" style="left:1422.5px;top:584px"><b><i><u class=k>¤</u></i></b></span>
<span class="t s c" style="left:511px;top:630px"><b>180<i><u class=k>¤</u></i></b></span>
<span class="t s c" style="left:581px;top:630px"><b>6<i><u class=k>¤</u></i></b></span>
<span class="t s c" style="left:644px;top:630px"><b>6<i><u class=k>¤</u></i></b></span>
<span class="t s" style="left:807.7px;top:630px;">°</span>
<span class="t s" style="left:813.5px;top:630px;font-size:22.5px;line-height:22.5px;">¤</span>
<span class="t s" style="left:868.7px;top:630px;">°</span>
<span class="t s" style="left:874.5px;top:630px;font-size:22.5px;line-height:22.5px;">¤</span>
<span class="t s c" style="left:826.5px;top:630px"><b>60<i><u class=k>¤</u></i></b></span>
<span class="t s c" style="left:892.5px;top:630px"><b>30<i><u class=k>¤</u></i></b></span>
<span class="t s" style="left:1055.7px;top:630px;">°</span>
<span class="t s" style="left:1061.5px;top:630px;font-size:22.5px;line-height:22.5px;">¤</span>
<span class="t s c" style="left:1023.5px;top:630px"><b>30<i><u class=k>¤</u></i></b></span>
<span class="t s c" style="left:1089.5px;top:630px"><b>120<i><u class=k>¤</u></i></b></span>
<span class="t s c" style="left:1155.5px;top:630px"><b><i><u class=k>¤</u></i></b></span>
<span class="t s" style="left:1317.2px;top:630px;">°</span>
<span class="t s" style="left:1323px;top:630px;font-size:22.5px;line-height:22.5px;">¤</span>
<span class="t s" style="left:1372.2px;top:630px;">°</span>
<span class="t s" style="left:1378px;top:630px;font-size:22.5px;line-height:22.5px;">¤</span>
<span class="t s" style="left:1420.7px;top:630px;">°</span>
<span class="t s" style="left:1426.5px;top:630px;font-size:22.5px;line-height:22.5px;">¤</span>
<span class="t s" style="left:1469.7px;top:630px;">°</span>
<span class="t s" style="left:1475.5px;top:630px;font-size:22.5px;line-height:22.5px;">¤</span>
<span class="t s" style="left:1520.2px;top:630px;">°</span>
<span class="t s" style="left:1526px;top:630px;font-size:22.5px;line-height:22.5px;">¤</span>
<span class="t s c" style="left:511px;top:667px"><b>180<i><u class=k>¤</u></i></b></span>
<span class="t s c" style="left:581px;top:667px"><b>6<i><u class=k>¤</u></i></b></span>
<span class="t s c" style="left:644px;top:667px"><b>6<i><u class=k>¤</u></i></b></span>
<span class="t s c" style="left:710px;top:667px"><b><i><u class=k>¤</u></i></b></span>
<span class="t s c" style="left:771px;top:667px"><b><i><u class=k>¤</u></i></b></span>
<span class="t s c" style="left:826.5px;top:667px"><b><i><u class=k>¤</u></i></b></span>
<span class="t s c" style="left:892.5px;top:667px"><b><i><u class=k>¤</u></i></b></span>
<span class="t s c" style="left:958px;top:667px"><b><i><u class=k>¤</u></i></b></span>
<span class="t s c" style="left:1023.5px;top:667px"><b><i><u class=k>¤</u></i></b></span>
<span class="t s c" style="left:1089.5px;top:667px"><b><i><u class=k>¤</u></i></b></span>
<span class="t s c" style="left:1155.5px;top:667px"><b><i><u class=k>¤</u></i></b></span>
<span class="t s c" style="left:1219.5px;top:667px"><b><i><u class=k>¤</u></i></b></span>
<span class="t s c" style="left:1274.5px;top:667px"><b><i><u class=k>¤</u></i></b></span>
<span class="t s c" style="left:1323px;top:667px"><b><i><u class=k>¤</u></i></b></span>
<span class="t s c" style="left:1372px;top:667px"><b><i><u class=k>¤</u></i></b></span>
<span class="t s c" style="left:1422.5px;top:667px"><b><i><u class=k>¤</u></i></b></span>
<span class="t s c" style="left:511px;top:709px"><b>180<i><u class=k>¤</u></i></b></span>
<span class="t s c" style="left:581px;top:709px"><b>6<i><u class=k>¤</u></i></b></span>
<span class="t s c" style="left:644px;top:709px"><b>6<i><u class=k>¤</u></i></b></span>
<span class="t s" style="left:807.7px;top:709px;">°</span>
<span class="t s" style="left:813.5px;top:709px;font-size:22.5px;line-height:22.5px;">¤</span>
<span class="t s" style="left:868.7px;top:709px;">°</span>
<span class="t s" style="left:874.5px;top:709px;font-size:22.5px;line-height:22.5px;">¤</span>
<span class="t s c" style="left:826.5px;top:709px"><b>60<i><u class=k>¤</u></i></b></span>
<span class="t s c" style="left:892.5px;top:709px"><b>30<i><u class=k>¤</u></i></b></span>
<span class="t s" style="left:1055.7px;top:709px;">°</span>
<span class="t s" style="left:1061.5px;top:709px;font-size:22.5px;line-height:22.5px;">¤</span>
<span class="t s c" style="left:1023.5px;top:709px"><b>30<i><u class=k>¤</u></i></b></span>
<span class="t s c" style="left:1089.5px;top:709px"><b>120<i><u class=k>¤</u></i></b></span>
<span class="t s" style="left:1253.2px;top:709px;">°</span>
<span class="t s" style="left:1259px;top:709px;font-size:22.5px;line-height:22.5px;">¤</span>
<span class="t s" style="left:1317.2px;top:709px;">°</span>
<span class="t s" style="left:1323px;top:709px;font-size:22.5px;line-height:22.5px;">¤</span>
<span class="t s" style="left:1372.2px;top:709px;">°</span>
<span class="t s" style="left:1378px;top:709px;font-size:22.5px;line-height:22.5px;">¤</span>
<span class="t s" style="left:1420.7px;top:709px;">°</span>
<span class="t s" style="left:1426.5px;top:709px;font-size:22.5px;line-height:22.5px;">¤</span>
<span class="t s" style="left:1469.7px;top:709px;">°</span>
<span class="t s" style="left:1475.5px;top:709px;font-size:22.5px;line-height:22.5px;">¤</span>
<span class="t s" style="left:1520.2px;top:709px;">°</span>
<span class="t s" style="left:1526px;top:709px;font-size:22.5px;line-height:22.5px;">¤</span>
<span class="t s c" style="left:511px;top:745px"><b>180<i><u class=k>¤</u></i></b></span>
<span class="t s c" style="left:581px;top:745px"><b>6<i><u class=k>¤</u></i></b></span>
<span class="t s c" style="left:644px;top:745px"><b>6<i><u class=k>¤</u></i></b></span>
<span class="t s" style="left:807.7px;top:745px;">°</span>
<span class="t s" style="left:813.5px;top:745px;font-size:22.5px;line-height:22.5px;">¤</span>
<span class="t s" style="left:868.7px;top:745px;">°</span>
<span class="t s" style="left:874.5px;top:745px;font-size:22.5px;line-height:22.5px;">¤</span>
<span class="t s c" style="left:826.5px;top:745px"><b>60<i><u class=k>¤</u></i></b></span>
<span class="t s c" style="left:892.5px;top:745px"><b>30<i><u class=k>¤</u></i></b></span>
<span class="t s" style="left:1055.7px;top:745px;">°</span>
<span class="t s" style="left:1061.5px;top:745px;font-size:22.5px;line-height:22.5px;">¤</span>
<span class="t s c" style="left:1023.5px;top:745px"><b>30<i><u class=k>¤</u></i></b></span>
<span class="t s c" style="left:1089.5px;top:745px"><b>120<i><u class=k>¤</u></i></b></span>
<span class="t s c" style="left:1155.5px;top:745px"><b><i><u class=k>¤</u></i></b></span>
<span class="t s c" style="left:1219.5px;top:745px"><b><i><u class=k>¤</u></i></b></span>
<span class="t s c" style="left:1274.5px;top:745px"><b><i><u class=k>¤</u></i></b></span>
<span class="t s c" style="left:1323px;top:745px"><b><i><u class=k>¤</u></i></b></span>
<span class="t s c" style="left:1372px;top:745px"><b><i><u class=k>¤</u></i></b></span>
<span class="t s c" style="left:1422.5px;top:745px"><b><i><u class=k>¤</u></i></b></span>
<span class="t s c" style="left:511px;top:781px"><b>180<i><u class=k>¤</u></i></b></span>
<span class="t s c" style="left:581px;top:781px"><b>6<i><u class=k>¤</u></i></b></span>
<span class="t s c" style="left:644px;top:781px"><b>6<i><u class=k>¤</u></i></b></span>
<span class="t s" style="left:807.7px;top:781px;">°</span>
<span class="t s" style="left:813.5px;top:781px;font-size:22.5px;line-height:22.5px;">¤</span>
<span class="t s" style="left:868.7px;top:781px;">°</span>
<span class="t s" style="left:874.5px;top:781px;font-size:22.5px;line-height:22.5px;">¤</span>
<span class="t s c" style="left:826.5px;top:781px"><b>60<i><u class=k>¤</u></i></b></span>
<span class="t s c" style="left:892.5px;top:781px"><b>30<i><u class=k>¤</u></i></b></span>
<span class="t s" style="left:1055.7px;top:781px;">°</span>
<span class="t s" style="left:1061.5px;top:781px;font-size:22.5px;line-height:22.5px;">¤</span>
<span class="t s c" style="left:1023.5px;top:781px"><b>30<i><u class=k>¤</u></i></b></span>
<span class="t s c" style="left:1089.5px;top:781px"><b>120<i><u class=k>¤</u></i></b></span>
<span class="t s" style="left:1253.2px;top:781px;">°</span>
<span class="t s" style="left:1259px;top:781px;font-size:22.5px;line-height:22.5px;">¤</span>
<span class="t s" style="left:1317.2px;top:781px;">°</span>
<span class="t s" style="left:1323px;top:781px;font-size:22.5px;line-height:22.5px;">¤</span>
<span class="t s" style="left:1372.2px;top:781px;">°</span>
<span class="t s" style="left:1378px;top:781px;font-size:22.5px;line-height:22.5px;">¤</span>
<span class="t s" style="left:1420.7px;top:781px;">°</span>
<span class="t s" style="left:1426.5px;top:781px;font-size:22.5px;line-height:22.5px;">¤</span>
<span class="t s" style="left:1469.7px;top:781px;">°</span>
<span class="t s" style="left:1475.5px;top:781px;font-size:22.5px;line-height:22.5px;">¤</span>
<span class="t s" style="left:1520.2px;top:781px;">°</span>
<span class="t s" style="left:1526px;top:781px;font-size:22.5px;line-height:22.5px;">¤</span>
<span class="t s c" style="left:511px;top:817px"><b>180<i><u class=k>¤</u></i></b></span>
<span class="t s c" style="left:581px;top:817px"><b>6<i><u class=k>¤</u></i></b></span>
<span class="t s c" style="left:644px;top:817px"><b>6<i><u class=k>¤</u></i></b></span>
<span class="t s" style="left:807.7px;top:817px;">°</span>
<span class="t s" style="left:813.5px;top:817px;font-size:22.5px;line-height:22.5px;">¤</span>
<span class="t s" style="left:868.7px;top:817px;">°</span>
<span class="t s" style="left:874.5px;top:817px;font-size:22.5px;line-height:22.5px;">¤</span>
<span class="t s c" style="left:826.5px;top:817px"><b>60<i><u class=k>¤</u></i></b></span>
<span class="t s c" style="left:892.5px;top:817px"><b>30<i><u class=k>¤</u></i></b></span>
<span class="t s" style="left:1055.7px;top:817px;">°</span>
<span class="t s" style="left:1061.5px;top:817px;font-size:22.5px;line-height:22.5px;">¤</span>
<span class="t s c" style="left:1023.5px;top:817px"><b>30<i><u class=k>¤</u></i></b></span>
<span class="t s c" style="left:1089.5px;top:817px"><b>120<i><u class=k>¤</u></i></b></span>
<span class="t s" style="left:1253.2px;top:817px;">°</span>
<span class="t s" style="left:1259px;top:817px;font-size:22.5px;line-height:22.5px;">¤</span>
<span class="t s" style="left:1317.2px;top:817px;">°</span>
<span class="t s" style="left:1323px;top:817px;font-size:22.5px;line-height:22.5px;">¤</span>
<span class="t s" style="left:1372.2px;top:817px;">°</span>
<span class="t s" style="left:1378px;top:817px;font-size:22.5px;line-height:22.5px;">¤</span>
<span class="t s" style="left:1420.7px;top:817px;">°</span>
<span class="t s" style="left:1426.5px;top:817px;font-size:22.5px;line-height:22.5px;">¤</span>
<span class="t s" style="left:1469.7px;top:817px;">°</span>
<span class="t s" style="left:1475.5px;top:817px;font-size:22.5px;line-height:22.5px;">¤</span>
<span class="t s" style="left:1520.2px;top:817px;">°</span>
<span class="t s" style="left:1526px;top:817px;font-size:22.5px;line-height:22.5px;">¤</span>
<span class="t s c" style="left:511px;top:853px"><b>180<i><u class=k>¤</u></i></b></span>
<span class="t s c" style="left:581px;top:853px"><b>6<i><u class=k>¤</u></i></b></span>
<span class="t s c" style="left:644px;top:853px"><b>6<i><u class=k>¤</u></i></b></span>
<span class="t s" style="left:807.7px;top:853px;">°</span>
<span class="t s" style="left:813.5px;top:853px;font-size:22.5px;line-height:22.5px;">¤</span>
<span class="t s" style="left:868.7px;top:853px;">°</span>
<span class="t s" style="left:874.5px;top:853px;font-size:22.5px;line-height:22.5px;">¤</span>
<span class="t s c" style="left:826.5px;top:853px"><b>60<i><u class=k>¤</u></i></b></span>
<span class="t s c" style="left:892.5px;top:853px"><b>30<i><u class=k>¤</u></i></b></span>
<span class="t s" style="left:1055.7px;top:853px;">°</span>
<span class="t s" style="left:1061.5px;top:853px;font-size:22.5px;line-height:22.5px;">¤</span>
<span class="t s c" style="left:1023.5px;top:853px"><b>30<i><u class=k>¤</u></i></b></span>
<span class="t s c" style="left:1089.5px;top:853px"><b>120<i><u class=k>¤</u></i></b></span>
<span class="t s" style="left:1253.2px;top:853px;">°</span>
<span class="t s" style="left:1259px;top:853px;font-size:22.5px;line-height:22.5px;">¤</span>
<span class="t s" style="left:1317.2px;top:853px;">°</span>
<span class="t s" style="left:1323px;top:853px;font-size:22.5px;line-height:22.5px;">¤</span>
<span class="t s" style="left:1372.2px;top:853px;">°</span>
<span class="t s" style="left:1378px;top:853px;font-size:22.5px;line-height:22.5px;">¤</span>
<span class="t s" style="left:1420.7px;top:853px;">°</span>
<span class="t s" style="left:1426.5px;top:853px;font-size:22.5px;line-height:22.5px;">¤</span>
<span class="t s" style="left:1469.7px;top:853px;">°</span>
<span class="t s" style="left:1475.5px;top:853px;font-size:22.5px;line-height:22.5px;">¤</span>
<span class="t s" style="left:1520.2px;top:853px;">°</span>
<span class="t s" style="left:1526px;top:853px;font-size:22.5px;line-height:22.5px;">¤</span>
<div style="left:1805px;top:971px;width:88px;height:4px;background:#cdcdcd;"></div>
<span class="t" style="left:7px;top:984px;font-size:17px;line-height:17px;color:#5a5a5a;letter-spacing:-0.638px;">Сторінка 5 із 7</span>
<span class="t" style="left:132px;top:984px;font-size:17px;line-height:17px;color:#5a5a5a;letter-spacing:-0.787px;">Кількість слів: 1962</span>
<svg style="position:absolute;left:290px;top:982px;" width="22" height="19" viewBox="0 0 22 19"><path d="M0.5 1.5Q5 0.5 9.5 2V16.5Q5 15 0.5 16Z" fill="none" stroke="#777" stroke-width="1"/><path d="M9.5 2Q11.5 1 14 1M9.5 16.5Q12 15.5 18 16" fill="none" stroke="#777" stroke-width="1"/><path d="M9.5 16.5V18.5" stroke="#777"/><path d="M13.5 4.5L20 11M20 4.5L13.5 11" stroke="#666" stroke-width="2.2"/></svg>
<span class="t" style="left:328.8px;top:984px;font-size:17px;line-height:17px;color:#5a5a5a;letter-spacing:-0.689px;">українська</span>
<svg style="position:absolute;left:427px;top:981px;" width="21" height="20" viewBox="0 0 21 20"><circle cx="4.5" cy="4.5" r="4.3" fill="#7a7a7a"/><rect x="9" y="2.5" width="11" height="3.5" fill="#7a7a7a"/><rect x="2.5" y="8.5" width="17.5" height="10.5" fill="#fff" stroke="#7a7a7a" stroke-width="1"/><path d="M5 11.5H8M10 11.5H13M15 11.5H18M5 14H8M10 14H13M15 14H18M5 16.5H8M10 16.5H13M15 16.5H18" stroke="#7a7a7a" stroke-width="1"/></svg>
<svg style="position:absolute;left:1542px;top:983px;" width="20" height="17" viewBox="0 0 20 17"><path d="M0.5 1.5Q5 0.3 9.5 2V16Q5 14.5 0.5 15.5ZM9.5 2Q14 0.3 18.5 1.5V15.5Q14 14.5 9.5 16" fill="none" stroke="#666" stroke-width="1"/><path d="M2.5 4.5H7.5M2.5 7H7.5M2.5 9.5H7.5M2.5 12H7.5M11.5 4.5H16.5M11.5 7H16.5M11.5 9.5H16.5M11.5 12H16.5" stroke="#777" stroke-width="1"/></svg>
<div style="left:1574px;top:976px;width:45px;height:32px;background:#c6c6c6;"></div>
<svg style="position:absolute;left:1587px;top:983px;" width="19" height="17" viewBox="0 0 19 17"><rect x="0.5" y="0.5" width="18" height="16" fill="#fff" stroke="#666" stroke-width="1"/><path d="M3 4H16M3 6.5H16M3 9H16M3 11.5H16M3 14H16" stroke="#777" stroke-width="1"/></svg>
<svg style="position:absolute;left:1631px;top:982px;" width="22" height="19" viewBox="0 0 22 19"><rect x="0.5" y="0.5" width="15" height="14" fill="#fff" stroke="#666" stroke-width="1"/><path d="M3 3.5H13M3 6H13M3 8.5H9M3 11H8" stroke="#777" stroke-width="1"/><circle cx="15.5" cy="13" r="5.2" fill="#fff" stroke="#666" stroke-width="1.2"/><path d="M10.5 13H20.5M15.5 8V18M12.5 9.5Q15.5 13 12.5 16.5M18.5 9.5Q15.5 13 18.5 16.5" stroke="#666" stroke-width=".9" fill="none"/><circle cx="15.5" cy="13" r="3" fill="#777" opacity=".55"/></svg>
<div style="left:1670px;top:990.5px;width:11px;height:2px;background:#555;"></div>
<div style="left:1686px;top:991px;width:150px;height:1px;background:#8a8a8a;"></div>
<div style="left:1758px;top:983px;width:5px;height:16px;background:#555;"></div>
<div style="left:1841.5px;top:990.5px;width:13px;height:2px;background:#555;"></div>
<div style="left:1847px;top:985px;width:2px;height:13px;background:#555;"></div>
<span class="t" style="left:1871.5px;top:984px;font-size:17px;line-height:17px;color:#5a5a5a;letter-spacing:-0.996px;">100%</span>
<div style="left:32.75px;top:1029.25px;width:30px;height:30px;background:radial-gradient(circle at 35% 30%,#f9c12f 0%,#f6a026 45%,#f1651c 100%);border-radius:50%;"></div>
<div style="left:42.5px;top:1019.3px;width:34.5px;height:22.7px;background:#2a2a2a;border-radius:11px;"></div>
<span class="t" style="left:50.5px;top:1023px;font-size:16px;line-height:16px;color:#ffffff;letter-spacing:-0.375px;">-1°</span>
<div style="left:347.0px;top:1027.5px;width:16.5px;height:16.3px;background:linear-gradient(135deg,#7fdcff 0%,#36b7f7 55%,#1598ee 100%);border-radius:1.500px;"></div>
<div style="left:347.0px;top:1045.5px;width:16.5px;height:16.3px;background:linear-gradient(135deg,#7fdcff 0%,#36b7f7 55%,#1598ee 100%);border-radius:1.500px;"></div>
<div style="left:365.2px;top:1027.5px;width:16.5px;height:16.3px;background:linear-gradient(135deg,#7fdcff 0%,#36b7f7 55%,#1598ee 100%);border-radius:1.500px;"></div>
<div style="left:365.2px;top:1045.5px;width:16.5px;height:16.3px;background:linear-gradient(135deg,#7fdcff 0%,#36b7f7 55%,#1598ee 100%);border-radius:1.500px;"></div>
<svg style="position:absolute;left:412px;top:1023px;" width="40" height="42" viewBox="0 0 40 42"><defs><linearGradient id="sg" x1="0" y1="1" x2="1" y2="0"><stop offset="0" stop-color="#176fd3"/><stop offset=".55" stop-color="#1f8fe0"/><stop offset="1" stop-color="#35d6a2"/></linearGradient></defs><path d="M27 28.500L34.800 36.500" stroke="#1f84dc" stroke-width="4.600" stroke-linecap="round"/><circle cx="17.750" cy="17.750" r="13.200" fill="#4b504d" stroke="url(#sg)" stroke-width="3.800"/></svg>
<svg style="position:absolute;left:0px;top:0px;" width="1" height="1" viewBox="0 0 1 1"><circle cx="497.9" cy="1043.9" r="17.9" fill="#fbbc05"/><path d="M497.9 1043.9L482.40 1034.95A17.9 17.9 0 0 1 513.40 1034.95Z" fill="#ea4335"/><path d="M497.9 1043.9L497.90 1061.80A17.9 17.9 0 0 1 482.40 1034.95Z" fill="#34a853"/><path d="M497.9 1043.9L513.40 1034.95A17.9 17.9 0 0 1 497.90 1061.80Z" fill="#fbbc05"/><path d="M513.40 1034.95L505.03 1039.78L493.78 1036.74L482.40 1034.95A17.9 17.9 0 0 1 513.40 1034.95Z" fill="#ea4335"/><circle cx="497.9" cy="1043.9" r="8.23" fill="#fff"/><circle cx="497.9" cy="1043.9" r="6.44" fill="#1a73e8"/></svg>
<svg style="position:absolute;left:545px;top:1025px;" width="38" height="38" viewBox="0 0 38 38"><defs><linearGradient id="eg" x1="0" y1="0" x2="1" y2="1"><stop offset="0" stop-color="#35c1f1"/><stop offset=".5" stop-color="#2a9be0"/><stop offset="1" stop-color="#0c59a4"/></linearGradient><linearGradient id="eg2" x1="0" y1="0" x2="1" y2="0"><stop offset="0" stop-color="#3ad0c0"/><stop offset="1" stop-color="#7ee05a"/></linearGradient></defs><circle cx="18.800" cy="18.800" r="17.800" fill="url(#eg)"/><path d="M3 12Q10 0.500 22 1.200Q36 3.500 36.500 16Q36 24.500 27 24.500Q21.500 24 22.500 19.500Q24.500 13.500 17.500 11.500Q9 10 3 12Z" fill="url(#eg2)"/><path d="M22.500 19.500Q21 25 28 26.500Q32 26.500 35.500 23.500Q33 33 24 36Q13 33.500 12.500 24Q13 17 19 15Q23 15.500 22.500 19.500Z" fill="#0d4f9a"/><path d="M12.500 24Q12.800 17.500 19 15Q14 12.500 8 17Q4 22 6 29Q10 36.500 19 36.500Q13 32 12.500 24Z" fill="#1b2530" opacity=".0"/><circle cx="10" cy="28" r="8.300" fill="#c9c9c9"/><circle cx="10" cy="25.300" r="3.100" fill="#8c8c8c"/><path d="M4.200 32.500Q5 28.800 10 28.800Q15 28.800 15.800 32.500Q13.500 35.300 10 35.300Q6.500 35.300 4.200 32.500Z" fill="#8c8c8c"/></svg>
<svg style="position:absolute;left:613px;top:1026.5px;" width="34" height="35" viewBox="0 0 34 35"><rect x="0" y="0" width="34" height="34.500" rx="2.500" fill="#1f3fc0"/><rect x="9.500" y="1" width="15.500" height="10" fill="#d0d3d8"/><rect x="19.500" y="2" width="4" height="8" fill="#1f3fc0"/><rect x="3.500" y="15" width="26.500" height="17" fill="#fdfdfd"/><path d="M5 18.500H28.500M5 23H28.500M5 27.500H17M5 30.800H28.500" stroke="#d83a3a" stroke-width="1.200"/><path d="M18.500 25H28M18.500 29H28" stroke="#444" stroke-width="1.300" stroke-dasharray="2 1.300"/></svg>
<div style="left:626.25px;top:1068.7px;width:8.5px;height:3.6px;background:#8a8a88;border-radius:1.8px;"></div>
<svg style="position:absolute;left:680px;top:1028px;" width="33" height="32" viewBox="0 0 33 32"><rect x="13" y="3.500" width="18.500" height="24.500" rx="1" fill="#fff" stroke="#1e7145" stroke-width="1.600"/><path d="M19 7H29M19 11H29M19 15H29M19 19H29M19 23H29M24 5V26" stroke="#1e7145" stroke-width="1.700"/><path d="M0 3.200L19.500 0V31.800L0 28.600Z" fill="#1e7145"/><path d="M5.300 9.500L13.200 22.300M13.200 9.500L5.300 22.300" stroke="#fff" stroke-width="2.700"/></svg>
<svg style="position:absolute;left:747px;top:1026px;" width="30" height="36" viewBox="0 0 30 36"><defs><linearGradient id="fg" x1="1" y1="0" x2="0" y2="1"><stop offset="0" stop-color="#8b4bd6"/><stop offset=".5" stop-color="#c9a3f0"/><stop offset="1" stop-color="#a46be0"/></linearGradient></defs><path d="M28.500 0.500Q29 12 22 21Q15 28.500 6.500 29.500L1.500 35L2.500 28Q3.500 18.500 12 10.500Q19 4 28.500 0.500Z" fill="url(#fg)"/><path d="M26 4Q16 12 3 33" stroke="#6a35b5" stroke-width="1.100" fill="none"/><path d="M5 31Q14 32.500 22 30" stroke="#3a3340" stroke-width="1.400" opacity=".6" fill="none"/></svg>
<svg style="position:absolute;left:810px;top:1026px;" width="36" height="36" viewBox="0 0 36 36"><defs><linearGradient id="og" x1="0" y1="0" x2="0" y2="1"><stop offset="0" stop-color="#ff1b2d"/><stop offset="1" stop-color="#c40a1f"/></linearGradient></defs><path d="M18 0.500A17.500 17.500 0 1 0 18 35.500A17.500 17.500 0 1 0 18 0.500ZM18 5.500Q25.500 6.500 25.500 18Q25.500 29.500 18 30.500Q10.500 29.500 10.500 18Q10.500 6.500 18 5.500Z" fill="url(#og)" fill-rule="evenodd"/></svg>
<svg style="position:absolute;left:875.5px;top:1028px;" width="38" height="33" viewBox="0 0 38 33"><path d="M0 3Q0 0.500 2.500 0.500H11.500L15.500 4H34.500Q37 4 37 6.500V12H0Z" fill="#e5a520"/><rect x="0" y="6.800" width="37" height="25.700" rx="2.300" fill="#ffcf48"/><path d="M6.500 32.500V25.500Q6.500 22.500 9.500 22.500H27.500Q30.500 22.500 30.500 25.500V32.500Z" fill="#1d8be0"/><rect x="11" y="26.200" width="15" height="2.300" rx="1" fill="#0f5fb0"/></svg>
<svg style="position:absolute;left:943px;top:1028px;" width="34" height="32" viewBox="0 0 34 32"><defs><linearGradient id="c1" x1="0" y1="0" x2="1" y2="1"><stop offset="0" stop-color="#2aa3f5"/><stop offset=".5" stop-color="#3b7ff0"/><stop offset="1" stop-color="#6a5ae8"/></linearGradient><linearGradient id="c2" x1="0" y1="0" x2="1" y2="1"><stop offset="0" stop-color="#4dd0a0"/><stop offset=".35" stop-color="#f0d040"/><stop offset=".7" stop-color="#f07a50"/><stop offset="1" stop-color="#e055b0"/></linearGradient><linearGradient id="c3" x1="0" y1="0" x2="1" y2="1"><stop offset="0" stop-color="#c070f0"/><stop offset="1" stop-color="#f070c0"/></linearGradient></defs><path d="M9.500 2.500Q11 0.500 14 0.500H23Q27 0.500 28 4.500L29 8.500H20Q17 8.500 16 11.500L14 18L7 17Z" fill="url(#c1)"/><path d="M3.500 10Q5 6.500 9 6.500H14L10.500 18.500Q9.500 22.500 13.500 23.500L17 24L15.500 28Q14.500 31.500 10.500 31.500H7Q3 31.500 2 27.500L0.500 19Q0.500 14 3.500 10Z" fill="url(#c2)"/><path d="M20.500 8.500H28Q32 8.500 32.800 12.500L33.500 18Q33.500 23 30 25.500H21.500Q18.500 25.500 17.500 28L18.500 22L21 13Z" fill="url(#c3)"/><path d="M12 23.500Q13.500 25.500 17 25.500H30Q27 31 22 31.500H15.500Q17 30 17.500 28L18 25.500Z" fill="#f08a60"/></svg>
<svg style="position:absolute;left:1009.5px;top:1028px;" width="33" height="32" viewBox="0 0 33 32"><rect x="13" y="3.500" width="18.500" height="24.500" rx="1" fill="#fff" stroke="#d24726" stroke-width="1.600"/><circle cx="24.500" cy="11.500" r="4.200" fill="none" stroke="#d24726" stroke-width="1.600"/><path d="M24.500 7.300V11.500H28.700" stroke="#d24726" stroke-width="1.600" fill="none"/><path d="M19.500 19.500H29M19.500 23.500H29" stroke="#d24726" stroke-width="1.700"/><path d="M0 3.200L19.500 0V31.800L0 28.600Z" fill="#d24726"/><path d="M6 23V9.300H10.300Q14 9.300 14 13Q14 16.800 10.300 16.800H6" fill="none" stroke="#fff" stroke-width="2.600"/></svg>
<div style="left:1022.25px;top:1068.7px;width:8.5px;height:3.6px;background:#8a8a88;border-radius:1.8px;"></div>
<div style="left:1069px;top:1014.3px;width:53px;height:59.2px;background:#2f2f2c;border-radius:7px;"></div>
<div style="left:1062px;top:1014.3px;width:53px;height:59.2px;background:#3a3937;border-radius:7px;border:1px solid #45443f;box-sizing:border-box;"></div>
<svg style="position:absolute;left:1075.7px;top:1028px;" width="33" height="32" viewBox="0 0 33 32"><rect x="13" y="3.500" width="18.500" height="24.500" rx="1" fill="#fff" stroke="#2b579a" stroke-width="1.600"/><path d="M19 7.500H29M19 11H29M19 14.500H29M19 18H29M19 21.500H29M19 25H29" stroke="#2b579a" stroke-width="1.700"/><path d="M0 3.200L19.500 0V31.800L0 28.600Z" fill="#2b579a"/><path d="M3.500 9.800L6.300 22L9.500 11.500L12.700 22L15.500 9.800" fill="none" stroke="#fff" stroke-width="2.200" stroke-linejoin="miter"/></svg>
<div style="left:1080px;top:1068px;width:24px;height:5px;background:#f3a590;border-radius:2.500px;"></div>
<div style="left:1140px;top:1026px;width:36.3px;height:35.8px;background:linear-gradient(180deg,#1368ff 0%,#0b5cff 60%,#0a50e6 100%);border-radius:14px;"></div>
<span class="t" style="left:1145.5px;top:1038px;font-size:11.5px;line-height:11.5px;color:#ffffff;font-weight:700;letter-spacing:-1.133px;">zoom</span>
<div style="left:1153.75px;top:1068.7px;width:8.5px;height:3.6px;background:#8a8a88;border-radius:1.8px;"></div>
<svg style="position:absolute;left:0px;top:0px;" width="1" height="1" viewBox="0 0 1 1"><circle cx="1224" cy="1044" r="18" fill="#fbbc05"/><path d="M1224 1044L1208.41 1035.00A18 18 0 0 1 1239.59 1035.00Z" fill="#ea4335"/><path d="M1224 1044L1224.00 1062.00A18 18 0 0 1 1208.41 1035.00Z" fill="#34a853"/><path d="M1224 1044L1239.59 1035.00A18 18 0 0 1 1224.00 1062.00Z" fill="#fbbc05"/><path d="M1239.59 1035.00L1231.17 1039.86L1219.86 1036.80L1208.41 1035.00A18 18 0 0 1 1239.59 1035.00Z" fill="#ea4335"/><circle cx="1224" cy="1044" r="8.28" fill="#fff"/><circle cx="1224" cy="1044" r="6.48" fill="#1a73e8"/></svg>
<div style="left:1225.5px;top:1022.3px;width:24px;height:24px;background:radial-gradient(circle at 50% 45%,#6d7f9d 0%,#8ea5cb 60%,#9fb4d6 100%);border-radius:50%;"></div>
<div style="left:1219.75px;top:1068.7px;width:8.5px;height:3.6px;background:#8a8a88;border-radius:1.8px;"></div>
<svg style="position:absolute;left:1290px;top:1043.5px;" width="1" height="1" viewBox="0 0 1 1"><g><rect x="-4" y="-18" width="8" height="8" rx="1.500" transform="rotate(0)" fill="#8e959d"/><rect x="-4" y="-18" width="8" height="8" rx="1.500" transform="rotate(45)" fill="#8e959d"/><rect x="-4" y="-18" width="8" height="8" rx="1.500" transform="rotate(90)" fill="#8e959d"/><rect x="-4" y="-18" width="8" height="8" rx="1.500" transform="rotate(135)" fill="#8e959d"/><rect x="-4" y="-18" width="8" height="8" rx="1.500" transform="rotate(180)" fill="#8e959d"/><rect x="-4" y="-18" width="8" height="8" rx="1.500" transform="rotate(225)" fill="#8e959d"/><rect x="-4" y="-18" width="8" height="8" rx="1.500" transform="rotate(270)" fill="#8e959d"/><rect x="-4" y="-18" width="8" height="8" rx="1.500" transform="rotate(315)" fill="#8e959d"/><circle r="14.200" fill="#8e959d"/><circle r="8.600" fill="#e9edf2"/><circle r="6.400" fill="#1668c8"/></g></svg>
<div style="left:1285.75px;top:1068.7px;width:8.5px;height:3.6px;background:#8a8a88;border-radius:1.8px;"></div>
<svg style="position:absolute;left:1338px;top:1026px;" width="36" height="38" viewBox="0 0 36 38"><path d="M9 1.500H26Q34 1.500 34 9.500V21Q34 29 26 29H17.500L11.500 35.500V29H9Q1.500 29 1.500 21V9.500Q1.500 1.500 9 1.500Z" fill="#7360f2" stroke="#ece9ff" stroke-width="2.200"/><path d="M11.500 8.500Q13 7 14.500 8.800L16.300 11.500Q17 12.800 15.800 14L14.800 15Q16.800 19.300 21 21.300L22.300 20Q23.300 19 24.800 19.800L27.300 21.500Q28.800 22.800 27.500 24.300Q25.300 27 22 25.800Q13.500 22.300 10.500 13.500Q9.800 10.300 11.500 8.500Z" fill="#fff"/><path d="M18.500 7Q26.500 7.500 27.500 16M19 10Q23.800 10.500 24.500 15.500" stroke="#fff" stroke-width="1.300" fill="none" stroke-linecap="round"/></svg>
<div style="left:1358px;top:1019px;width:24px;height:24px;background:#f23a38;border-radius:7px;"></div>
<span class="t" style="left:1365.3px;top:1023px;font-size:17px;line-height:17px;color:#ffffff;">5</span>
<div style="left:1351.75px;top:1068.7px;width:8.5px;height:3.6px;background:#8a8a88;border-radius:1.8px;"></div>
<svg style="position:absolute;left:1490px;top:1037px;" width="18" height="12" viewBox="0 0 18 12"><path d="M1.800 10L9 2.800L16.200 10" fill="none" stroke="#fff" stroke-width="1.900" stroke-linecap="round" stroke-linejoin="round"/></svg>
<svg style="position:absolute;left:1531px;top:1031px;" width="32" height="26" viewBox="0 0 32 26"><rect x="5" y="1" width="5.600" height="10.500" rx="2.800" fill="none" stroke="#f0b896" stroke-width="1.400"/><path d="M1.800 8.500Q1.800 14.300 7.800 14.300Q13.800 14.300 13.800 8.500M7.800 14.300V18.500" fill="none" stroke="#f0b896" stroke-width="1.400" stroke-linecap="round"/><path d="M30 8.800L15.800 14.800L23 17.300L25.500 24.500Z" fill="none" stroke="#f0b896" stroke-width="1.400" stroke-linejoin="round"/></svg>
<span class="t" style="left:1586px;top:1037px;font-size:17.5px;line-height:17.5px;color:#ffffff;letter-spacing:-1.146px;">ENG</span>
<svg style="position:absolute;left:1648px;top:1034px;" width="26" height="19" viewBox="0 0 26 19"><path d="M1.300 7.300Q12.500 -3.300 23.700 7.300" fill="none" stroke="#fff" stroke-width="1.700" stroke-linecap="round"/><path d="M4.800 10.800Q12.500 3.700 20.200 10.800" fill="none" stroke="#fff" stroke-width="1.700" stroke-linecap="round"/><path d="M8.300 14.300Q12.500 10.500 16.700 14.300" fill="none" stroke="#fff" stroke-width="1.700" stroke-linecap="round"/><circle cx="12.500" cy="17" r="1.500" fill="#fff"/></svg>
<svg style="position:absolute;left:1684px;top:1033px;" width="27" height="22" viewBox="0 0 27 22"><path d="M1.500 7.500H5.500L11.500 2V20L5.500 14.500H1.500Z" fill="none" stroke="#fff" stroke-width="1.500" stroke-linejoin="round"/><path d="M14.800 7.500Q17 11 14.800 14.500M18.300 5Q22 11 18.300 17M21.800 2.500Q27 11 21.800 19.500" fill="none" stroke="#fff" stroke-width="1.500" stroke-linecap="round"/></svg>
<svg style="position:absolute;left:1720.5px;top:1036px;" width="26" height="16" viewBox="0 0 26 16"><rect x="1" y="1" width="20.500" height="13.800" rx="3.500" fill="none" stroke="#fff" stroke-width="1.600"/><rect x="3.800" y="3.800" width="15" height="8.200" rx="1.500" fill="#fff"/><path d="M23.500 5.500V10.500" stroke="#fff" stroke-width="2" stroke-linecap="round"/></svg>
<span class="t" style="left:1814.2px;top:1024px;font-size:18px;line-height:18px;color:#ffffff;letter-spacing:-0.769px;">13:40</span>
<span class="t" style="left:1770.6px;top:1047px;font-size:18px;line-height:18px;color:#ffffff;letter-spacing:-0.529px;">20.02.2026</span>
<svg style="position:absolute;left:1867px;top:1032px;" width="24" height="26" viewBox="0 0 24 26"><path d="M3 18.500Q5.500 16.500 5.500 11Q5.500 5 10.500 4.300V3Q11.500 2 12.500 3V4.300Q17.500 5 17.500 11Q17.500 16.500 20 18.500Z" fill="#fff"/><path d="M9.500 21Q11.500 23.500 13.500 21Z" fill="#fff" stroke="#fff" stroke-width="1.300"/><path d="M8.500 9.500H12.500L8.500 14.500H12.500" fill="none" stroke="#1f2a17" stroke-width="1.300"/><path d="M16.500 1.500H21L16.500 6.800H21" fill="none" stroke="#fff" stroke-width="1.500"/></svg>
<div style="left:137px;top:0px;width:1763px;height:96px;background:#0d0d0d;border-radius:0 0 13px 13px;"></div>
<div style="left:150px;top:0px;width:1740px;height:1px;background:#2a2a2a;"></div>
<span class="t" style="left:187px;top:73px;font-size:17.6px;line-height:17.6px;color:#d4d4d4;letter-spacing:0.677px;-webkit-text-stroke:0.35px #d4d4d4;">Звук</span>
<span class="t" style="left:305.5px;top:73px;font-size:17.6px;line-height:17.6px;color:#d4d4d4;letter-spacing:0.019px;-webkit-text-stroke:0.35px #d4d4d4;">Видео</span>
<span class="t" style="left:433.5px;top:73px;font-size:17.6px;line-height:17.6px;color:#d4d4d4;letter-spacing:0.438px;-webkit-text-stroke:0.35px #d4d4d4;">Участники</span>
<span class="t" style="left:616.75px;top:73px;font-size:17.6px;line-height:17.6px;color:#d4d4d4;letter-spacing:-0.479px;-webkit-text-stroke:0.35px #d4d4d4;">Чат</span>
<span class="t" style="left:713.75px;top:73px;font-size:17.6px;line-height:17.6px;color:#d4d4d4;letter-spacing:0.334px;-webkit-text-stroke:0.35px #d4d4d4;">Поделиться</span>
<span class="t" style="left:866.75px;top:73px;font-size:17.6px;line-height:17.6px;color:#d4d4d4;letter-spacing:-0.278px;-webkit-text-stroke:0.35px #d4d4d4;">Пауза</span>
<span class="t" style="left:964.5px;top:73px;font-size:17.6px;line-height:17.6px;color:#d4d4d4;letter-spacing:0.858px;-webkit-text-stroke:0.35px #d4d4d4;">Компоновка</span>
<span class="t" style="left:1091.25px;top:73px;font-size:17.6px;line-height:17.6px;color:#d4d4d4;letter-spacing:0.664px;-webkit-text-stroke:0.35px #d4d4d4;">Комментировать</span>
<span class="t" style="left:1255.75px;top:73px;font-size:17.6px;line-height:17.6px;color:#d4d4d4;letter-spacing:0.669px;-webkit-text-stroke:0.35px #d4d4d4;">Дистанционное управление</span>
<span class="t" style="left:1518.25px;top:73px;font-size:17.6px;line-height:17.6px;color:#d4d4d4;letter-spacing:0.551px;-webkit-text-stroke:0.35px #d4d4d4;">Показать конференцию</span>
<span class="t" style="left:1743.75px;top:73px;font-size:17.6px;line-height:17.6px;color:#d4d4d4;letter-spacing:0.874px;-webkit-text-stroke:0.35px #d4d4d4;">Дополнительно</span>
<svg style="position:absolute;left:190px;top:16px;" width="32" height="44" viewBox="0 0 32 44"><rect x="9.8" y="5" width="12.4" height="23" rx="6.2" fill="none" stroke="#fff" stroke-width="2.2"/><path d="M10.9 20.3H21.1V22Q21.1 27 16 27Q10.9 27 10.9 22Z" fill="#23d95f"/><path d="M5.6 21.5Q5.6 33 16 33Q26.400 33 26.4 21.5" fill="none" stroke="#fff" stroke-width="2.2" stroke-linecap="round"/><path d="M16 33V38.800M9.5 39H22.5" fill="none" stroke="#fff" stroke-width="2.2" stroke-linecap="round"/></svg>
<svg style="position:absolute;left:241px;top:32.6px;" width="14" height="10" viewBox="0 0 14 10"><path d="M2.2 2.4L7 7.3L11.8 2.4" fill="none" stroke="#fff" stroke-width="2.2" stroke-linecap="round" stroke-linejoin="round"/></svg>
<svg style="position:absolute;left:310px;top:24px;" width="44" height="30" viewBox="0 0 44 30"><rect x="4.900" y="5.100" width="24.400" height="18.800" rx="5.500" fill="none" stroke="#fff" stroke-width="2.300"/><path d="M32.200 11.800L39 7.300V22L32.200 17.500Z" fill="none" stroke="#fff" stroke-width="2.200" stroke-linejoin="round"/></svg>
<svg style="position:absolute;left:367px;top:32.6px;" width="14" height="10" viewBox="0 0 14 10"><path d="M2.2 2.4L7 7.3L11.8 2.4" fill="none" stroke="#fff" stroke-width="2.2" stroke-linecap="round" stroke-linejoin="round"/></svg>
<svg style="position:absolute;left:460px;top:20px;" width="36" height="36" viewBox="0 0 36 36"><circle cx="12.200" cy="10.200" r="3.400" fill="none" stroke="#fff" stroke-width="2.100"/><circle cx="23.600" cy="14.600" r="3.400" fill="none" stroke="#fff" stroke-width="2.100"/><path d="M14.400 31.100H8.500Q5.400 31.100 5.400 28V25Q5.400 17.600 12.500 17.600Q16.500 17.600 18.300 20.200" fill="none" stroke="#fff" stroke-width="2.200" stroke-linecap="round"/><path d="M17 28Q17 21.600 24 21.600Q31 21.600 31 28Q31 31.200 28 31.200H20Q17 31.200 17 28Z" fill="none" stroke="#fff" stroke-width="2.200"/></svg>
<span class="t" style="left:500.5px;top:13px;font-size:16.5px;line-height:16.5px;color:#cfcfcf;-webkit-text-stroke:0.3px #cfcfcf;">5</span>
<svg style="position:absolute;left:532px;top:32.6px;" width="14" height="10" viewBox="0 0 14 10"><path d="M2.2 2.4L7 7.3L11.8 2.4" fill="none" stroke="#fff" stroke-width="2.2" stroke-linecap="round" stroke-linejoin="round"/></svg>
<svg style="position:absolute;left:610px;top:18px;" width="40" height="40" viewBox="0 0 40 40"><path d="M12 8.400Q13 3.800 24 3.500Q35.500 3 36.200 12Q36.700 20 33 22.500" fill="none" stroke="#fff" stroke-width="2.100" stroke-linecap="round"/><path d="M12 11.500H22Q29.500 11.500 29.500 19V24Q29.500 31.500 22 31.500H21L13.500 35.800Q11.500 36.300 12.500 34.500L14.500 31.200Q4.500 31 4.500 24V19Q4.500 11.500 12 11.500Z" fill="none" stroke="#fff" stroke-width="2.100" stroke-linejoin="round"/><circle cx="11.300" cy="21.600" r="1.600" fill="#fff"/><circle cx="17" cy="21.600" r="1.600" fill="#fff"/><circle cx="22.700" cy="21.600" r="1.600" fill="#fff"/></svg>
<svg style="position:absolute;left:673px;top:32.6px;" width="14" height="10" viewBox="0 0 14 10"><path d="M2.2 2.4L7 7.3L11.8 2.4" fill="none" stroke="#fff" stroke-width="2.2" stroke-linecap="round" stroke-linejoin="round"/></svg>
<div style="left:745.75px;top:23px;width:36.5px;height:29.5px;background:#0df28b;border-radius:4.5px;"></div>
<svg style="position:absolute;left:752px;top:27px;" width="24" height="22" viewBox="0 0 24 22"><path d="M12 19.500V4.500M4.500 11L12 3.500L19.500 11" fill="none" stroke="#0d0d0d" stroke-width="3.600" stroke-linejoin="miter"/></svg>
<svg style="position:absolute;left:799px;top:32.6px;" width="14" height="10" viewBox="0 0 14 10"><path d="M2.2 2.4L7 7.3L11.8 2.4" fill="none" stroke="#fff" stroke-width="2.2" stroke-linecap="round" stroke-linejoin="round"/></svg>
<div style="left:880.5px;top:25px;width:7.6px;height:25.5px;background:#ffffff;border-radius:2px;"></div>
<div style="left:892px;top:25px;width:7.6px;height:25.5px;background:#ffffff;border-radius:2px;"></div>
<svg style="position:absolute;left:994px;top:19px;" width="48" height="38" viewBox="0 0 48 38"><rect x="5.200" y="5.200" width="36.400" height="26.800" rx="4" fill="none" stroke="#fff" stroke-width="2.400"/><circle cx="16.300" cy="15.300" r="4.600" fill="#fff"/><path d="M6.500 31.500V29Q6.500 22.500 16.300 22.500Q26 22.500 26 29V31.500Z" fill="#fff"/></svg>
<svg style="position:absolute;left:1143px;top:17px;" width="40" height="42" viewBox="0 0 40 42"><path d="M5.200 31.700L6.300 24.800L25.700 5.300Q27.200 3.800 28.700 5.300L33.700 10.300Q35.200 11.800 33.700 13.300L14.200 32.800Z" fill="none" stroke="#fff" stroke-width="2.200" stroke-linejoin="round"/><path d="M21.500 9.300L29.800 17.600" stroke="#fff" stroke-width="2.200"/><path d="M4.500 37.800H35.500" stroke="#fff" stroke-width="2.200" stroke-linecap="round"/></svg>
<svg style="position:absolute;left:1358px;top:17px;" width="36" height="42" viewBox="0 0 36 42"><rect x="5.700" y="4.700" width="24.600" height="32.600" rx="12.300" fill="none" stroke="#fff" stroke-width="2.400"/><path d="M18 12V18" stroke="#fff" stroke-width="3.400" stroke-linecap="round"/></svg>
<div style="left:1602.5px;top:24.2px;width:34.5px;height:25px;background:#ffffff;border-radius:4.5px;"></div>
<div style="left:1616.3px;top:33.5px;width:24.9px;height:19.8px;background:#0d0d0d;border-radius:6.500px;"></div>
<div style="left:1618.3px;top:35.5px;width:20.9px;height:15.8px;background:#ffffff;border-radius:5px;"></div>
<div style="left:1620.6px;top:37.8px;width:16.3px;height:11.2px;background:#0d0d0d;border-radius:3px;"></div>
<svg style="position:absolute;left:1793px;top:18px;" width="40" height="40" viewBox="0 0 40 40"><circle cx="20" cy="19.800" r="16.800" fill="none" stroke="#fff" stroke-width="2.200"/><circle cx="11.500" cy="19.800" r="1.900" fill="#fff"/><circle cx="20" cy="19.800" r="1.900" fill="#fff"/><circle cx="28.500" cy="19.800" r="1.900" fill="#fff"/></svg>
<div style="left:568px;top:96px;width:501px;height:35px;background:#23d95d;border-radius:0 0 0 9px;"></div>
<div style="left:1069px;top:96px;width:401px;height:35px;background:#e02828;border-radius:0 0 9px 0;"></div>
<svg style="position:absolute;left:586px;top:104px;" width="18" height="18" viewBox="0 0 18 18"><path d="M16 1Q7 1.500 5.200 9.800L1 9.500L6.800 16.500L12 9.800L8.800 9.700Q10 4 16 2.800Z" fill="#0b5a00"/></svg>
<span class="t" style="left:653px;top:105px;font-size:17.4px;line-height:17.4px;color:#221a3e;font-weight:700;letter-spacing:0.216px;">Вы запустили демонстрацию экрана</span>
<svg style="position:absolute;left:1034px;top:104px;" width="18" height="20" viewBox="0 0 18 20"><path d="M9 0.500L16.500 3.500V9Q16.500 15.500 9 19Q1.500 15.500 1.500 9V3.500Z" fill="#1c4a12"/><path d="M5 9.800L8 12.800L13 7" fill="none" stroke="#23d95d" stroke-width="2"/></svg>
<div style="left:1080px;top:103.5px;width:13px;height:11.5px;background:#d9fbff;border-radius:1.5px;"></div>
<span class="t" style="left:1108.4px;top:105px;font-size:17.4px;line-height:17.4px;color:#ffffff;font-weight:700;letter-spacing:-0.567px;">Остановить совместное использование</span>
<div style="left:1541px;top:168px;width:346px;height:802px;background:#14171a;border-radius:5px;box-shadow:0 1px 5px rgba(0,0,0,.55);"></div>
<div style="left:1541px;top:168px;width:346px;height:40px;background:#0f0f0f;border-radius:5px 5px 0 0;"></div>
<div style="left:1554.8px;top:193.5px;width:18.4px;height:4.6px;background:#c9c9c9;border-radius:2.300px;"></div>
<div style="left:1597px;top:186px;width:18.2px;height:12px;background:#c9c9c9;border-radius:2.500px;"></div>
<div style="left:1639px;top:180px;width:18.4px;height:8px;background:#2d8cff;border-radius:2.500px;"></div>
<div style="left:1639px;top:190.3px;width:18.4px;height:8px;background:#2d8cff;border-radius:2.500px;"></div>
<div style="left:1679.3px;top:178.3px;width:5.8px;height:5.8px;background:#c9c9c9;border-radius:1.600px;"></div>
<div style="left:1679.3px;top:185.9px;width:5.8px;height:5.8px;background:#c9c9c9;border-radius:1.600px;"></div>
<div style="left:1679.3px;top:193.5px;width:5.8px;height:5.8px;background:#c9c9c9;border-radius:1.600px;"></div>
<div style="left:1686.8999999999999px;top:178.3px;width:5.8px;height:5.8px;background:#c9c9c9;border-radius:1.600px;"></div>
<div style="left:1686.8999999999999px;top:185.9px;width:5.8px;height:5.8px;background:#c9c9c9;border-radius:1.600px;"></div>
<div style="left:1686.8999999999999px;top:193.5px;width:5.8px;height:5.8px;background:#c9c9c9;border-radius:1.600px;"></div>
<div style="left:1694.5px;top:178.3px;width:5.8px;height:5.8px;background:#c9c9c9;border-radius:1.600px;"></div>
<div style="left:1694.5px;top:185.9px;width:5.8px;height:5.8px;background:#c9c9c9;border-radius:1.600px;"></div>
<div style="left:1694.5px;top:193.5px;width:5.8px;height:5.8px;background:#c9c9c9;border-radius:1.600px;"></div>
<svg style="position:absolute;left:1851px;top:176px;" width="26" height="26" viewBox="0 0 26 26"><path d="M14.500 11.500L24.500 1.500M17.500 1.500H24.500V8.500M11.500 14.500L1.500 24.500M1.500 17.500V24.500H8.500" fill="none" stroke="#9a9a9a" stroke-width="1.600"/></svg>
<div style="left:1545px;top:208.5px;width:338px;height:191.5px;border-radius:11px;background:#0cf48f;overflow:hidden;"><svg style="position:absolute;left:3px;top:3px;border-radius:8px;overflow:hidden" width="332" height="185.5" viewBox="0 0 332 185.500" preserveAspectRatio="none"><defs><linearGradient id="vw" x1="0" y1="0" x2="1" y2="0"><stop offset="0" stop-color="#efc1a4"/><stop offset=".55" stop-color="#e9b191"/><stop offset="1" stop-color="#e3a583"/></linearGradient><linearGradient id="vc" x1="0" y1="0" x2="0" y2="1"><stop offset="0" stop-color="#e6d8d2"/><stop offset="1" stop-color="#dcc8c1"/></linearGradient><radialGradient id="vf" cx=".5" cy=".42" r=".6"><stop offset="0" stop-color="#835868"/><stop offset=".6" stop-color="#6f4858"/><stop offset="1" stop-color="#573646"/></radialGradient><filter id="vb" x="-5%" y="-5%" width="110%" height="110%"><feGaussianBlur stdDeviation="0.55"/></filter></defs><g filter="url(#vb)"><rect x="-5" y="-5" width="345" height="200" fill="#efb290"/><path d="M-3.0 -3.5L21.9 -3.5L151.7 46.3L151.7 113.9L-3.0 124.5Z" fill="url(#vw)" /><path d="M21.9 -3.5L281.5 -3.5L269.9 41.8L151.7 46.3Z" fill="url(#vc)" /><path d="M55.7 7.2H277.0" stroke="#d8c5bf" stroke-width=".7"/><path d="M77.0 15.2H275.3" stroke="#d8c5bf" stroke-width=".7"/><path d="M98.4 23.2H273.5" stroke="#d8c5bf" stroke-width=".7"/><path d="M116.1 30.3H272.2" stroke="#d8c5bf" stroke-width=".7"/><path d="M132.1 36.5H271.2" stroke="#d8c5bf" stroke-width=".7"/><path d="M68.1 0.9L157.0 43.1" stroke="#d8c5bf" stroke-width=".7"/><path d="M107.2 0.9L173.0 43.1" stroke="#d8c5bf" stroke-width=".7"/><path d="M144.6 0.9L189.0 43.1" stroke="#d8c5bf" stroke-width=".7"/><path d="M181.9 0.9L205.0 43.1" stroke="#d8c5bf" stroke-width=".7"/><path d="M219.3 0.9L221.0 43.1" stroke="#d8c5bf" stroke-width=".7"/><path d="M254.8 0.9L240.6 43.1" stroke="#d8c5bf" stroke-width=".7"/><path d="M204.1 6.3L228.2 5.4L229.0 11.6L208.6 13.4Z" fill="#8e7b6b" /><path d="M222.8 35.3L237.9 34.6L238.5 37.4L225.0 38.5Z" fill="#9a8473" /><path d="M162.4 38.8L175.7 38.1L176.6 40.2L165.0 41.0Z" fill="#a8927f" /><path d="M115.2 16.1L137.5 14.3L140.7 18.7L121.5 21.4Z" fill="#e2d6cc" /><path d="M151.7 46.3L269.9 41.8L269.9 110.3L151.7 112.1Z" fill="#eadad4" /><path d="M145.5 44.2L153.5 46.6L153.5 112.1L145.5 113.0Z" fill="#e9a274" /><path d="M222.8 49.8H231.7" stroke="#8c8890" stroke-width="2.100" opacity=".7"/><path d="M226.4 55.2H245.9" stroke="#8c8890" stroke-width="2.100" opacity=".7"/><path d="M220.2 59.1H258.4" stroke="#8c8890" stroke-width="2.100" opacity=".7"/><path d="M221.4 64.1H253.0" stroke="#8c8890" stroke-width="2.100" opacity=".7"/><path d="M221.4 69.8H228.2" stroke="#8c8890" stroke-width="2.100" opacity=".7"/><path d="M244.2 69.8H251.3" stroke="#8c8890" stroke-width="2.100" opacity=".7"/><path d="M254.8 69.8H263.7" stroke="#8c8890" stroke-width="2.100" opacity=".7"/><path d="M222.8 74.7H240.6" stroke="#8c8890" stroke-width="2.100" opacity=".7"/><path d="M243.3 74.7H251.3" stroke="#8c8890" stroke-width="2.100" opacity=".7"/><path d="M255.7 74.7H264.6" stroke="#8c8890" stroke-width="2.100" opacity=".7"/><path d="M226.4 82.2H247.7" stroke="#8c8890" stroke-width="2.100" opacity=".7"/><path d="M249.5 82.2H254.8" stroke="#8c8890" stroke-width="2.100" opacity=".7"/><path d="M228.2 86.3H245.9" stroke="#8c8890" stroke-width="2.100" opacity=".7"/><path d="M248.6 86.3H255.7" stroke="#8c8890" stroke-width="2.100" opacity=".7"/><path d="M229.9 90.7H245.0" stroke="#8c8890" stroke-width="2.100" opacity=".7"/><path d="M246.8 90.7H263.7" stroke="#8c8890" stroke-width="2.100" opacity=".7"/><path d="M231.7 96.1H258.4" stroke="#8c8890" stroke-width="2.100" opacity=".7"/><path d="M233.5 101.8H256.6" stroke="#8c8890" stroke-width="2.100" opacity=".7"/><path d="M127.7 55.2L131.4 55.2L131.4 59.1L127.7 59.1Z" fill="#5d7a66" /><path d="M121.1 67.6L137.8 69.0L137.8 111.2L121.1 112.4Z" fill="#dfa873" /><path d="M122.0 69.8L130.0 70.3L130.0 111.2L122.0 112.1Z" fill="#c98c55" /><path d="M125.4 80.1L127.5 80.1L127.5 96.1L125.4 96.1Z" fill="#e4c7a8" /><path d="M-3.0 119.2L121.5 105.9L121.5 111.2L-3.0 129.0Z" fill="#dccbc0" /><path d="M-3.0 128.1L121.5 111.2L151.7 112.1L151.7 188.5L-3.0 188.5Z" fill="#c98653" /><path d="M103.7 113.9L129.5 114.2L129.5 119.2L103.7 118.8Z" fill="#cf8a52" /><path d="M105.5 111.2L130.4 111.7L129.5 114.2L103.7 113.9Z" fill="#e9c096" /><path d="M88.6 116.7L125.0 118.1L124.3 124.5L88.6 123.1Z" fill="#cf8a52" /><path d="M86.8 113.9L128.6 114.6L125.0 118.1L88.6 116.7Z" fill="#e9c096" /><path d="M67.8 119.9L106.9 121.7L106.2 129.0L67.8 127.7Z" fill="#cf8a52" /><path d="M67.2 116.7L114.4 117.8L106.9 121.7L67.8 119.9Z" fill="#e9c096" /><path d="M42.3 123.5L85.5 125.9L84.8 135.5L42.3 133.4Z" fill="#cf8a52" /><path d="M41.5 120.3L96.9 121.3L85.5 125.9L42.3 123.5Z" fill="#e9c096" /><path d="M93.9 133.1L128.9 131.6L128.9 138.7L93.9 138.7Z" fill="#cf8a52" /><path d="M93.9 129.5L128.9 128.1L128.9 131.6L93.9 133.1Z" fill="#e9c096" /><path d="M7.3 129.1L53.5 130.9L52.8 147.6L7.3 144.1Z" fill="#cf8a52" /><path d="M6.2 124.9L70.3 126.3L53.5 130.9L7.3 129.1Z" fill="#e9c096" /><path d="M56.6 142.7L119.7 139.8L119.7 153.7L56.6 151.5Z" fill="#cf8a52" /><path d="M55.7 137.3L119.7 134.8L119.7 139.8L56.6 142.7Z" fill="#e9c096" /><path d="M0.2 136.3L13.4 137.3L13.4 153.0L0.2 153.7Z" fill="#cf8a52" /><path d="M0.2 129.9L37.2 132.0L13.4 137.3L0.2 136.3Z" fill="#e9c096" /><path d="M0.2 157.6L119.7 157.2L119.7 188.5L0.2 188.5Z" fill="#cf8a52" /><path d="M0.2 153.7L38.3 146.2L119.7 149.8L119.7 157.2L0.2 157.6Z" fill="#e9c096" /><path d="M57.5 130.9V144.1" stroke="#8a8f98" stroke-width="1.100"/><path d="M52.5 131.6V147.6" stroke="#8a8f98" stroke-width="1.100"/><path d="M86.8 125.9V135.5" stroke="#8a8f98" stroke-width="1.100"/><path d="M108.7 121.7V128.1" stroke="#8a8f98" stroke-width="1.100"/><path d="M125.4 118.5V123.8" stroke="#8a8f98" stroke-width="1.100"/><path d="M14.1 137.3V149.4" stroke="#8a8f98" stroke-width="1.100"/><path d="M21.0 137.3V148.0" stroke="#8a8f98" stroke-width="1.100"/><path d="M14.8 138.7L50.3 140.9L50.3 147.6L14.8 149.4Z" fill="#b06c3c" /><path d="M88.6 124.5L124.3 124.9L124.3 128.4L88.6 128.4Z" fill="#b87444" /><path d="M281.5 -3.5L337.0 -3.5L337.0 188.5L317.1 188.5L269.9 110.3L269.9 41.8Z" fill="#eeb088" /><path d="M276.5 7.2L283.6 0.9L283.6 121.0L276.5 110.3Z" fill="#e69e6c" /><path d="M283.6 0.1L312.6 0.1L312.6 153.0L283.6 121.0Z" fill="#f5e6da" /><path d="M286.8 0.4V124.5" stroke="#ead0c0" stroke-width=".9"/><path d="M290.0 0.4V128.0" stroke="#ead0c0" stroke-width=".9"/><path d="M293.2 0.4V131.5" stroke="#ead0c0" stroke-width=".9"/><path d="M296.4 0.4V135.0" stroke="#ead0c0" stroke-width=".9"/><path d="M299.6 0.4V138.6" stroke="#ead0c0" stroke-width=".9"/><path d="M302.8 0.4V142.1" stroke="#ead0c0" stroke-width=".9"/><path d="M306.0 0.4V145.6" stroke="#ead0c0" stroke-width=".9"/><path d="M309.2 0.4V149.1" stroke="#ead0c0" stroke-width=".9"/><path d="M312.4 0.4V152.7" stroke="#ead0c0" stroke-width=".9"/><path d="M283.6 121.0L312.6 153.0L312.6 161.9L283.6 127.2Z" fill="#b9855e" /><path d="M312.6 0.1L324.5 0.1L324.5 161.9L312.6 156.5Z" fill="#d98e5c" /><path d="M324.5 0.1L337.0 0.1L337.0 188.5L324.5 170.8Z" fill="#e3aa84" /><path d="M269.9 41.8L276.5 37.4L276.5 110.3L269.9 110.3Z" fill="#f1bb98" /><path d="M233.5 108.5L271.7 108.2L317.1 188.5L242.4 188.5Z" fill="#e2a06b" /><path d="M236.3 111.4L273.5 111.4L273.8 114.2L236.0 114.2Z" fill="#d68850" /><path d="M238.8 108.2L270.8 108.2L273.5 111.4L236.3 111.4Z" fill="#f0b684" /><path d="M234.4 119.5L279.0 119.5L279.4 122.4L234.4 122.4Z" fill="#d68850" /><path d="M235.3 115.3L275.4 115.3L279.0 119.5L234.4 119.5Z" fill="#f0b684" /><path d="M237.0 128.4L284.3 128.4L285.1 133.1L237.4 133.1Z" fill="#d68850" /><path d="M237.0 123.8L280.8 123.8L284.3 128.4L237.0 128.4Z" fill="#f0b684" /><path d="M241.0 140.9L290.7 140.9L291.8 148.0L241.7 148.0Z" fill="#d68850" /><path d="M239.2 134.5L286.1 134.5L290.7 140.9L241.0 140.9Z" fill="#f0b684" /><path d="M246.3 158.7L303.2 158.7L304.6 170.4L247.4 170.4Z" fill="#d68850" /><path d="M244.2 149.8L296.1 149.8L303.2 158.7L246.3 158.7Z" fill="#f0b684" /><path d="M249.5 172.2L310.3 172.2L318.1 188.5L253.0 188.5Z" fill="#f0b684" /><path d="M309.9 156.5L324.5 167.2L324.5 188.5L317.1 188.5Z" fill="#d98f5c" /><path d="M174.8 52.5L190.8 53.4L203.3 57.8L215.7 67.6L223.7 80.1L227.8 96.1L231.4 110.3L237.0 121.0L244.5 133.4L249.5 149.4L246.3 163.6L242.4 168.1L245.9 188.5L121.5 188.5L119.7 156.5L117.6 144.1L125.0 124.5L131.8 112.1L128.2 103.2L133.6 89.0L139.2 73.0L148.1 64.1L158.8 56.1Z" fill="#3a2530" /><path d="M151.7 60.5L174.8 53.8L201.5 58.7L189.0 67.6L157.0 71.2Z" fill="#4b313b" opacity=".8"/><path d="M121.5 156.5L139.2 153.0L149.9 188.5L121.5 188.5Z" fill="#3d3e45" /><path d="M222.8 156.5L244.2 161.9L245.9 188.5L210.4 188.5Z" fill="#40434a" /><path d="M243.3 168.1L260.2 166.3L276.2 174.3L290.4 188.5L243.3 188.5Z" fill="#6c9db0" /><path d="M149.9 89.0L157.9 79.7L171.3 76.2L192.6 76.2L206.8 81.8L217.5 94.3L225.0 113.9L227.4 131.6L226.4 149.4L221.4 167.2L210.4 188.5L157.9 188.5L144.9 167.2L139.2 149.4L137.8 131.6L140.3 110.3Z" fill="url(#vf)" /><path d="M157.0 89.0L174.8 81.8L196.1 82.7L210.4 92.5L206.8 106.7L157.0 106.7Z" fill="#8a6070" opacity=".55"/><path d="M148.1 112.1L174.8 110.3L176.6 117.4L149.9 119.2Z" fill="#5a3a48" opacity=".7"/><path d="M189.0 110.3L219.3 112.1L218.4 119.2L189.9 117.4Z" fill="#5a3a48" opacity=".7"/><path d="M139.2 117.8L224.6 119.2" stroke="#241a22" stroke-width="1.500" fill="none"/><path d="M141.9 118.5Q142.8 133.4 160.6 133.8Q176.6 133.4 178.4 119.2" stroke="#2b2028" stroke-width="1.200" fill="rgba(150,135,150,.28)"/><path d="M188.1 119.2Q189.9 136.1 206.8 136.6Q221.4 135.2 222.5 119.9" stroke="#2b2028" stroke-width="1.200" fill="rgba(170,160,175,.35)"/><path d="M176.6 121.0L185.5 121.0L192.6 137.0L185.5 141.4L173.0 138.7L170.4 133.4Z" fill="#7c5262" opacity=".75"/><path d="M167.7 157.4L176.6 153.0L185.5 152.6L196.1 154.8L201.5 158.7L192.6 164.5L176.6 165.4Z" fill="#4a2a55" /><path d="M172.1 157.4L185.5 155.6L197.9 158.0L185.5 159.7Z" fill="#2f1a38" /><circle cx="132.1" cy="103.2" r="4.500" fill="#2c1b24" opacity=".6"/><circle cx="128.9" cy="121.0" r="4.500" fill="#2c1b24" opacity=".6"/><circle cx="123.6" cy="137.0" r="4.500" fill="#2c1b24" opacity=".6"/><circle cx="121.5" cy="151.2" r="4.500" fill="#2c1b24" opacity=".6"/><circle cx="228.2" cy="96.1" r="4.500" fill="#2c1b24" opacity=".6"/><circle cx="233.5" cy="112.1" r="4.500" fill="#2c1b24" opacity=".6"/><circle cx="240.6" cy="128.1" r="4.500" fill="#2c1b24" opacity=".6"/><circle cx="245.9" cy="144.1" r="4.500" fill="#2c1b24" opacity=".6"/><circle cx="244.5" cy="156.5" r="4.500" fill="#2c1b24" opacity=".6"/></g></svg></div>
<div style="left:1549px;top:367px;width:123px;height:29.5px;background:rgba(44,40,42,0.74);border-radius:8px;"></div>
<span class="t" style="left:1556px;top:373px;font-size:18px;line-height:18px;color:#ffffff;letter-spacing:0.189px;">Віра Бутенко</span>
<div style="left:1655px;top:434px;width:119.3px;height:119px;border-radius:13px;overflow:hidden;background:#dfe0df;"><svg width="120" height="119" viewBox="0 0 120 119" style="position:absolute;left:0;top:0;filter:blur(0.8px)"><defs><linearGradient id="g1" x1="0" y1="0" x2="1" y2="0"><stop offset="0" stop-color="#e6e7e5"/><stop offset="1" stop-color="#d6d7d9"/></linearGradient><radialGradient id="h1" cx=".4" cy=".35" r=".75"><stop offset="0" stop-color="#c6935a"/><stop offset=".55" stop-color="#a56f3f"/><stop offset="1" stop-color="#4f3526"/></radialGradient></defs><rect x="-3" y="-3" width="126" height="125" fill="url(#g1)"/><path d="M67 4Q86 4 96 20Q104 34 103 52Q110 64 107 76Q104 90 94 92Q84 96 78 86L40 88Q28 88 24 82Q26 70 18 62Q8 52 14 40Q18 22 34 14Q48 4 67 4Z" fill="url(#h1)"/><path d="M30 24Q20 34 18 50M38 16Q26 30 28 52M96 40Q104 56 100 76M88 78Q98 74 100 60" stroke="#d9b07a" stroke-width="2.500" fill="none" opacity=".6"/><path d="M48 46Q48 26 66 22Q84 22 88 42Q91 60 84 72Q76 82 68 82Q56 80 50 66Q47 56 48 46Z" fill="#ecc6ac"/><path d="M50 40Q56 24 72 22Q60 30 56 44Q52 56 54 68Q46 56 50 40Z" fill="#b98252" opacity=".7"/><path d="M58 43H65M73 43H80" stroke="#6a4a3a" stroke-width="1.600"/><path d="M67 46Q66 54 70 56" stroke="#c9987e" stroke-width="1.500" fill="none"/><path d="M62 63Q70 66 78 62" stroke="#c46a66" stroke-width="2" fill="none"/><path d="M57 76H74V98H57Z" fill="#e2b79c"/><path d="M0 119Q2 100 22 96L40 86Q52 84 58 92L66 104L76 92L90 96Q102 100 104 119Z" fill="#f5f3f0"/><path d="M28 100Q32 88 44 84L50 92Q46 104 50 119H34Q28 110 28 100Z" fill="#c93a40"/><path d="M42 88L58 96L62 119H50Q46 104 42 88Z" fill="#d8545a" opacity=".8"/><path d="M74 96L86 92Q96 100 98 119H72Q74 106 74 96Z" fill="#c93a40"/><path d="M32 104L46 100M36 112L48 110M78 102L92 106M76 112L94 114M44 92L52 100" stroke="#f7ece8" stroke-width="2.200" stroke-dasharray="2.500 2.500"/><path d="M56 90L66 106L76 90L70 84H62Z" fill="#fbfaf8"/></svg></div>
<div style="left:1550px;top:555.5px;width:204.5px;height:29.0px;background:rgba(39,41,42,0.94);border-radius:8px;"></div>
<svg style="position:absolute;left:1553.5px;top:559.0px;" width="21" height="22" viewBox="0 0 21 22"><rect x="6.500" y="1.300" width="8.300" height="12.500" rx="4.100" fill="#f0524f"/><path d="M8.600 13H12.700V17.600H8.600Z" fill="#f0524f"/><rect x="6.300" y="17.600" width="8.600" height="2.300" rx=".5" fill="#f0524f"/><path d="M21.500 -0.300L1.700 19.500" stroke="#27292a" stroke-width="1.800"/><path d="M20.200 1L0.700 20.500" stroke="#f0524f" stroke-width="1.600" stroke-linecap="round"/></svg>
<span class="t" style="left:1582px;top:562px;font-size:18px;line-height:18px;color:#ffffff;letter-spacing:0.184px;">Kateryna Alekseieva</span>
<div style="left:1655px;top:623px;width:119.3px;height:119px;border-radius:13px;overflow:hidden;background:#d6d4b6;"><svg width="120" height="119" viewBox="0 0 120 119" style="position:absolute;left:0;top:0;filter:blur(0.8px)"><defs><linearGradient id="g2" x1="0" y1="0" x2="0" y2="1"><stop offset="0" stop-color="#d9d7b8"/><stop offset="1" stop-color="#cfcfb2"/></linearGradient></defs><rect x="-3" y="-3" width="126" height="125" fill="url(#g2)"/><path d="M-3 -3H24V86H-3Z" fill="#fdfcf8"/><path d="M4 0Q10 30 16 60L22 84H12Q8 40 4 0Z" fill="#ead4c6"/><path d="M11 -3H31V78Q26 82 22 76Q16 40 11 -3Z" fill="#8d9584"/><path d="M26 -3H35V26Q30 24 26 -3Z" fill="#cdbda8"/><path d="M31 28H36V80H31Z" fill="#e9e7d6"/><path d="M22 70Q28 66 32 60V74L24 78Z" fill="#e6e4dc"/><path d="M-3 84L36 80V122H-3Z" fill="#23252e"/><path d="M-3 82L37 78L36 85L-3 90Z" fill="#4b4e5a"/><path d="M4 100H30" stroke="#3a3d48" stroke-width="3"/><path d="M53 40Q52 22 70 21Q88 22 88 42Q89 54 84 60H58Q52 52 53 40Z" fill="#cdb690"/><path d="M58 46Q57 32 70 31Q83 32 82 48Q81 62 70 65Q59 62 58 46Z" fill="#dba98c"/><path d="M56 36Q62 26 76 28Q84 32 84 42Q78 32 66 34Q60 36 56 44Z" fill="#d9c39c"/><path d="M62 44H67M74 44H79" stroke="#6a4a40" stroke-width="1.500"/><path d="M64 55Q70 59 77 55" stroke="#b0504c" stroke-width="1.800" fill="none"/><path d="M62 62H79V76H62Z" fill="#d7a387"/><path d="M63 72Q70 78 78 72" stroke="#9aa0b0" stroke-width="1.500" fill="none"/><path d="M28 122Q30 92 44 78L60 68L70 80L80 68L98 74Q110 82 114 122Z" fill="#f4f3f1"/><path d="M60 68L70 82L66 70ZM80 68L70 82L75 70Z" fill="#e0ded9"/><path d="M70 82V122" stroke="#dddbd6" stroke-width="1.600"/><path d="M40 122Q42 100 50 88M100 122Q100 100 96 86" stroke="#e0ded9" stroke-width="2" fill="none"/></svg></div>
<div style="left:1550px;top:745px;width:196.70000000000005px;height:28.5px;background:rgba(39,41,42,0.94);border-radius:8px;"></div>
<svg style="position:absolute;left:1553.5px;top:748.5px;" width="21" height="22" viewBox="0 0 21 22"><rect x="6.500" y="1.300" width="8.300" height="12.500" rx="4.100" fill="#f0524f"/><path d="M8.600 13H12.700V17.600H8.600Z" fill="#f0524f"/><rect x="6.300" y="17.600" width="8.600" height="2.300" rx=".5" fill="#f0524f"/><path d="M21.500 -0.300L1.700 19.500" stroke="#27292a" stroke-width="1.800"/><path d="M20.200 1L0.700 20.500" stroke="#f0524f" stroke-width="1.600" stroke-linecap="round"/></svg>
<span class="t" style="left:1582px;top:751px;font-size:18px;line-height:18px;color:#ffffff;letter-spacing:0.133px;">Tetiana Balanovska</span>
<div style="left:1655px;top:812px;width:119.3px;height:112px;border-radius:13px 13px 0 0;overflow:hidden;background:#e6dccb;"><svg width="120" height="119" viewBox="0 0 120 119" style="position:absolute;left:0;top:0;filter:blur(0.8px)"><defs><radialGradient id="g3" cx=".28" cy=".15" r=".8"><stop offset="0" stop-color="#fffdf8"/><stop offset=".5" stop-color="#efe6d6"/><stop offset="1" stop-color="#d9ccb4"/></radialGradient><linearGradient id="h3" x1="0" y1="0" x2="1" y2="1"><stop offset="0" stop-color="#9a6a44"/><stop offset=".6" stop-color="#8a5636"/><stop offset="1" stop-color="#a66a3c"/></linearGradient></defs><rect x="-3" y="-3" width="126" height="125" fill="url(#g3)"/><path d="M48 -3H123V22L60 8Z" fill="#d8c8ac"/><path d="M92 24H123V40H96Z" fill="#f6f0e4"/><path d="M2 40H20V60H2Z" fill="#e9e4d8"/><path d="M5 44H17V57H5Z" fill="#9cc4d2"/><path d="M8 50H15V57H8Z" fill="#e4a6a8"/><path d="M0 60H28V63H0ZM26 38H42V41H26Z" fill="#d5c6ac"/><path d="M34 28H38V38H34Z" fill="#6fae8e"/><path d="M39 28H43V38H39Z" fill="#d87a7a"/><path d="M36 122Q34 90 40 66Q42 40 52 24Q60 10 74 11Q90 12 98 30Q106 50 110 76Q116 100 118 122Z" fill="url(#h3)"/><path d="M51 52Q50 24 72 22Q90 24 91 50Q92 70 84 80Q74 88 66 86Q54 82 51 52Z" fill="#e4ad8c"/><path d="M52 40Q58 20 78 22Q66 26 60 38Q54 52 54 70Q48 56 52 40Z" fill="#a9744a" opacity=".75"/><path d="M56 44H66M74 44H84" stroke="#5e4034" stroke-width="1.800"/><path d="M68 48Q66 58 72 60" stroke="#c58c6e" stroke-width="1.600" fill="none"/><path d="M60 66Q70 74 82 65Q70 69 60 66Z" fill="#b84a48" stroke="#b84a48" stroke-width="1"/><path d="M20 122Q30 104 52 100Q70 110 88 100Q108 104 116 122Z" fill="#c99880"/></svg></div>
<div style="left:1550px;top:891.6px;width:243px;height:28.899999999999977px;background:rgba(39,41,42,0.94);border-radius:8px;"></div>
<svg style="position:absolute;left:1553.5px;top:895.1px;" width="21" height="22" viewBox="0 0 21 22"><rect x="6.500" y="1.300" width="8.300" height="12.500" rx="4.100" fill="#f0524f"/><path d="M8.600 13H12.700V17.600H8.600Z" fill="#f0524f"/><rect x="6.300" y="17.600" width="8.600" height="2.300" rx=".5" fill="#f0524f"/><path d="M21.500 -0.300L1.700 19.500" stroke="#27292a" stroke-width="1.800"/><path d="M20.200 1L0.700 20.500" stroke="#f0524f" stroke-width="1.600" stroke-linecap="round"/></svg>
<span class="t" style="left:1582px;top:899px;font-size:18px;line-height:18px;color:#ffffff;letter-spacing:0.445px;">Кристина Драмарецька</span>
<div style="left:1546px;top:923.5px;width:336px;height:43px;background:linear-gradient(180deg,#1e1e1e 0%,#141414 45%,#0a0a0a 100%);border-radius:0 0 3px 3px;"></div>
<svg style="position:absolute;left:1705px;top:940.5px;" width="18" height="11" viewBox="0 0 18 11"><path d="M1.500 1.500L9 8.800L16.500 1.500" fill="none" stroke="#fff" stroke-width="2" stroke-linecap="round" stroke-linejoin="round"/></svg>
<div style="left:23px;top:931px;width:48px;height:48px;background:#22252a;border-radius:50%;"></div>
<svg style="position:absolute;left:33px;top:941.5px;" width="30" height="30" viewBox="0 0 30 30"><path d="M4.800 20.500L5.800 15L18.500 2.300Q19.800 1 21 2.300L24.500 5.800Q25.800 7 24.500 8.300L11.800 21Z" fill="none" stroke="#23e68a" stroke-width="1.500" stroke-linejoin="round"/><path d="M16 4.800L22 10.800" stroke="#23e68a" stroke-width="1.500"/><path d="M4 25.500H24.500" stroke="#23e68a" stroke-width="1.500" stroke-linecap="round"/></svg>
</body></html>
